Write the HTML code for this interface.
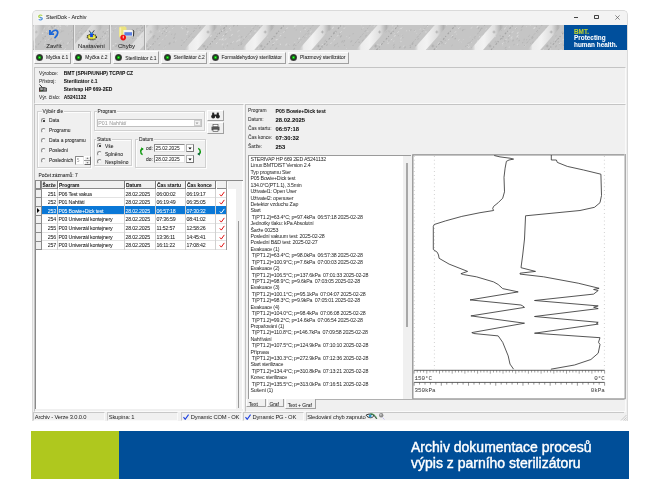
<!DOCTYPE html><html><head><meta charset="utf-8"><style>
*{margin:0;padding:0;box-sizing:border-box}
html,body{width:660px;height:495px;background:#fff;overflow:hidden;font-family:"Liberation Sans",sans-serif;color:#000}
.a{position:absolute}
.t{position:absolute;white-space:nowrap;line-height:1;-webkit-text-stroke-width:0.04px}
.tab{position:absolute;background:#f0f0f0;border:1px solid #a0a0a0;border-top-color:#fdfdfd;border-left-color:#fdfdfd}
.led{position:absolute;width:7px;height:7px;border-radius:50%;background:radial-gradient(circle at 50% 50%,#40ff40 0,#10b010 20%,#1d3a1d 42%,#3a3a3a 58%,#6a6a6a 82%,#a8a8a8 100%)}
.gb{position:absolute;border:1px solid #d0d0d0;box-shadow:inset 1px 1px 0 #fdfdfd,1px 1px 0 #fdfdfd}
.gl{-webkit-text-stroke-width:0.04px;position:absolute;background:#f0f0f0;padding:0 1px;font-size:4.9px;line-height:1;color:#222;white-space:nowrap}
.rd{position:absolute;width:5px;height:5px;border-radius:50%;border:0.7px solid;border-color:#8a8a8a #ececec #ececec #8a8a8a;background:#f8f8f8}
.rd.on::after{content:"";position:absolute;left:1.1px;top:1.1px;width:1.8px;height:1.8px;border-radius:50%;background:#111}
.f5{font-size:4.9px;color:#1a1a1a}
.cell{position:absolute;font-size:4.85px;line-height:1;white-space:nowrap;color:#1a1a1a}
.tl{position:absolute;left:250.5px;font-size:5.3px;letter-spacing:-0.21px;line-height:1;white-space:nowrap;color:#262626}
.sb{-webkit-text-stroke-width:0px;position:absolute;top:412.3px;height:8.4px;border:0.8px solid;border-color:#c8c8c8 #fafafa #fafafa #c8c8c8;font-size:5.8px;letter-spacing:-0.17px;line-height:8.6px;padding-left:0.3px;white-space:nowrap;color:#222}
</style></head><body><div style="position:absolute;left:0;top:0;width:660px;height:495px;will-change:transform">
<div class="a" style="left:32px;top:10px;width:596px;height:411px;background:#f0f0f0;border:1px solid #dadada;border-bottom:none;border-radius:5px 5px 0 0"></div>
<div class="a" style="left:33px;top:11px;width:594px;height:14px;background:#f3f3f3;border-radius:4px 4px 0 0"></div>
<svg class="a" style="left:36.5px;top:14px" width="7" height="7" viewBox="0 0 7 7"><circle cx="3.5" cy="3.5" r="3.4" fill="#fafafa"/><path d="M5.3 1.6 C4.2 0.6 1.6 0.9 1.7 2.6 C1.8 3.6 3.4 3.3 4 3.6" fill="none" stroke="#a8d04a" stroke-width="1.2"/><path d="M1.7 5.4 C2.8 6.4 5.4 6.1 5.3 4.4 C5.2 3.4 3.6 3.7 3 3.4" fill="none" stroke="#4a8fd8" stroke-width="1.2"/></svg>
<div class="t" style="left:46px;top:15.2px;font-size:5.45px;color:#222">SteriDok - Archiv</div>
<div class="a" style="left:573.5px;top:17px;width:4.5px;height:0.6px;background:#444"></div>
<div class="a" style="left:594.2px;top:14.6px;width:4.6px;height:4.6px;border:0.6px solid #444;border-radius:0.8px"></div>
<svg class="a" style="left:615px;top:14.6px" width="5" height="5" viewBox="0 0 5 5"><path d="M0.4 0.4L4.6 4.6M4.6 0.4L0.4 4.6" stroke="#444" stroke-width="0.6"/></svg>
<svg class="a" style="left:33px;top:25px" width="531" height="25" viewBox="33 25 531 25"><defs><linearGradient id="st" x1="0" y1="0" x2="1" y2="0"><stop offset="0" stop-color="#c6c6c6" stop-opacity="0"/><stop offset="0.15" stop-color="#ececec"/><stop offset="0.4" stop-color="#f2f2f2"/><stop offset="0.7" stop-color="#dedede"/><stop offset="0.88" stop-color="#b0b0b0"/><stop offset="1" stop-color="#c6c6c6" stop-opacity="0"/></linearGradient></defs><rect x="33" y="25" width="531" height="25" fill="#c5c5c5"/><ellipse cx="205.0" cy="28.8" rx="0.5" ry="0.6" fill="#d4d4d4" opacity="0.7" transform="rotate(-50 205.0 28.8)"/><ellipse cx="83.0" cy="39.6" rx="0.7" ry="0.3" fill="#e2e2e2" opacity="0.7" transform="rotate(-50 83.0 39.6)"/><ellipse cx="255.0" cy="31.0" rx="0.9" ry="0.6" fill="#e2e2e2" opacity="0.7" transform="rotate(-50 255.0 31.0)"/><ellipse cx="98.7" cy="30.6" rx="1.1" ry="0.3" fill="#d4d4d4" opacity="0.7" transform="rotate(-50 98.7 30.6)"/><ellipse cx="343.9" cy="26.2" rx="0.5" ry="0.6" fill="#aeaeae" opacity="0.7" transform="rotate(-50 343.9 26.2)"/><ellipse cx="186.8" cy="28.6" rx="1.1" ry="0.5" fill="#a6a6a6" opacity="0.7" transform="rotate(-50 186.8 28.6)"/><ellipse cx="395.1" cy="27.6" rx="1.2" ry="0.4" fill="#e2e2e2" opacity="0.7" transform="rotate(-50 395.1 27.6)"/><ellipse cx="323.9" cy="26.6" rx="1.1" ry="0.5" fill="#a6a6a6" opacity="0.7" transform="rotate(-50 323.9 26.6)"/><ellipse cx="315.3" cy="44.4" rx="1.1" ry="0.5" fill="#dcdcdc" opacity="0.7" transform="rotate(-50 315.3 44.4)"/><ellipse cx="192.2" cy="44.9" rx="1.3" ry="0.3" fill="#d4d4d4" opacity="0.7" transform="rotate(-50 192.2 44.9)"/><ellipse cx="192.4" cy="37.4" rx="1.3" ry="0.4" fill="#b6b6b6" opacity="0.7" transform="rotate(-50 192.4 37.4)"/><ellipse cx="553.5" cy="28.0" rx="0.6" ry="0.4" fill="#dcdcdc" opacity="0.7" transform="rotate(-50 553.5 28.0)"/><ellipse cx="528.6" cy="35.5" rx="0.5" ry="0.5" fill="#d4d4d4" opacity="0.7" transform="rotate(-50 528.6 35.5)"/><ellipse cx="452.0" cy="45.5" rx="1.2" ry="0.5" fill="#b6b6b6" opacity="0.7" transform="rotate(-50 452.0 45.5)"/><ellipse cx="340.9" cy="36.4" rx="1.5" ry="0.5" fill="#a6a6a6" opacity="0.7" transform="rotate(-50 340.9 36.4)"/><ellipse cx="385.7" cy="26.5" rx="0.8" ry="0.5" fill="#d4d4d4" opacity="0.7" transform="rotate(-50 385.7 26.5)"/><ellipse cx="394.7" cy="36.1" rx="0.9" ry="0.6" fill="#d4d4d4" opacity="0.7" transform="rotate(-50 394.7 36.1)"/><ellipse cx="45.0" cy="36.5" rx="1.1" ry="0.5" fill="#aeaeae" opacity="0.7" transform="rotate(-50 45.0 36.5)"/><ellipse cx="148.9" cy="32.2" rx="0.7" ry="0.5" fill="#d4d4d4" opacity="0.7" transform="rotate(-50 148.9 32.2)"/><ellipse cx="495.7" cy="27.0" rx="0.9" ry="0.4" fill="#dcdcdc" opacity="0.7" transform="rotate(-50 495.7 27.0)"/><ellipse cx="105.7" cy="35.8" rx="0.7" ry="0.5" fill="#e2e2e2" opacity="0.7" transform="rotate(-50 105.7 35.8)"/><ellipse cx="223.5" cy="47.1" rx="0.6" ry="0.4" fill="#aeaeae" opacity="0.7" transform="rotate(-50 223.5 47.1)"/><ellipse cx="156.2" cy="30.8" rx="1.4" ry="0.4" fill="#dcdcdc" opacity="0.7" transform="rotate(-50 156.2 30.8)"/><ellipse cx="182.7" cy="28.6" rx="0.8" ry="0.5" fill="#e2e2e2" opacity="0.7" transform="rotate(-50 182.7 28.6)"/><ellipse cx="539.1" cy="42.3" rx="1.5" ry="0.6" fill="#e2e2e2" opacity="0.7" transform="rotate(-50 539.1 42.3)"/><ellipse cx="425.8" cy="36.4" rx="1.4" ry="0.5" fill="#d4d4d4" opacity="0.7" transform="rotate(-50 425.8 36.4)"/><ellipse cx="244.9" cy="27.6" rx="0.9" ry="0.4" fill="#d4d4d4" opacity="0.7" transform="rotate(-50 244.9 27.6)"/><ellipse cx="555.9" cy="36.0" rx="0.8" ry="0.3" fill="#a6a6a6" opacity="0.7" transform="rotate(-50 555.9 36.0)"/><ellipse cx="33.1" cy="28.8" rx="1.5" ry="0.5" fill="#a6a6a6" opacity="0.7" transform="rotate(-50 33.1 28.8)"/><ellipse cx="70.3" cy="30.2" rx="0.6" ry="0.4" fill="#dcdcdc" opacity="0.7" transform="rotate(-50 70.3 30.2)"/><ellipse cx="217.5" cy="34.1" rx="0.5" ry="0.5" fill="#a6a6a6" opacity="0.7" transform="rotate(-50 217.5 34.1)"/><ellipse cx="552.2" cy="37.0" rx="0.5" ry="0.3" fill="#b6b6b6" opacity="0.7" transform="rotate(-50 552.2 37.0)"/><ellipse cx="214.9" cy="31.6" rx="0.6" ry="0.3" fill="#d4d4d4" opacity="0.7" transform="rotate(-50 214.9 31.6)"/><ellipse cx="538.0" cy="38.2" rx="1.2" ry="0.7" fill="#aeaeae" opacity="0.7" transform="rotate(-50 538.0 38.2)"/><ellipse cx="435.6" cy="32.5" rx="1.4" ry="0.6" fill="#d4d4d4" opacity="0.7" transform="rotate(-50 435.6 32.5)"/><ellipse cx="171.7" cy="34.2" rx="0.8" ry="0.4" fill="#aeaeae" opacity="0.7" transform="rotate(-50 171.7 34.2)"/><ellipse cx="320.6" cy="37.6" rx="0.7" ry="0.6" fill="#d4d4d4" opacity="0.7" transform="rotate(-50 320.6 37.6)"/><ellipse cx="556.0" cy="46.3" rx="1.4" ry="0.6" fill="#aeaeae" opacity="0.7" transform="rotate(-50 556.0 46.3)"/><ellipse cx="153.4" cy="37.9" rx="1.3" ry="0.7" fill="#b6b6b6" opacity="0.7" transform="rotate(-50 153.4 37.9)"/><ellipse cx="452.6" cy="36.8" rx="1.2" ry="0.7" fill="#aeaeae" opacity="0.7" transform="rotate(-50 452.6 36.8)"/><ellipse cx="270.5" cy="48.4" rx="1.5" ry="0.4" fill="#b6b6b6" opacity="0.7" transform="rotate(-50 270.5 48.4)"/><ellipse cx="150.1" cy="30.7" rx="0.8" ry="0.5" fill="#aeaeae" opacity="0.7" transform="rotate(-50 150.1 30.7)"/><ellipse cx="556.2" cy="40.3" rx="1.0" ry="0.6" fill="#a6a6a6" opacity="0.7" transform="rotate(-50 556.2 40.3)"/><ellipse cx="457.6" cy="27.1" rx="0.5" ry="0.5" fill="#d4d4d4" opacity="0.7" transform="rotate(-50 457.6 27.1)"/><ellipse cx="410.8" cy="30.0" rx="0.9" ry="0.6" fill="#aeaeae" opacity="0.7" transform="rotate(-50 410.8 30.0)"/><ellipse cx="79.1" cy="48.7" rx="0.9" ry="0.5" fill="#d4d4d4" opacity="0.7" transform="rotate(-50 79.1 48.7)"/><ellipse cx="535.7" cy="43.1" rx="1.6" ry="0.3" fill="#aeaeae" opacity="0.7" transform="rotate(-50 535.7 43.1)"/><ellipse cx="346.7" cy="36.6" rx="0.6" ry="0.6" fill="#d4d4d4" opacity="0.7" transform="rotate(-50 346.7 36.6)"/><ellipse cx="553.5" cy="41.4" rx="0.6" ry="0.5" fill="#b6b6b6" opacity="0.7" transform="rotate(-50 553.5 41.4)"/><ellipse cx="44.4" cy="45.0" rx="1.2" ry="0.5" fill="#d4d4d4" opacity="0.7" transform="rotate(-50 44.4 45.0)"/><ellipse cx="528.8" cy="35.8" rx="1.4" ry="0.4" fill="#aeaeae" opacity="0.7" transform="rotate(-50 528.8 35.8)"/><ellipse cx="166.7" cy="32.3" rx="1.3" ry="0.4" fill="#aeaeae" opacity="0.7" transform="rotate(-50 166.7 32.3)"/><ellipse cx="322.1" cy="45.9" rx="1.5" ry="0.4" fill="#a6a6a6" opacity="0.7" transform="rotate(-50 322.1 45.9)"/><ellipse cx="276.3" cy="39.6" rx="0.9" ry="0.7" fill="#e2e2e2" opacity="0.7" transform="rotate(-50 276.3 39.6)"/><ellipse cx="299.4" cy="38.3" rx="1.0" ry="0.6" fill="#e2e2e2" opacity="0.7" transform="rotate(-50 299.4 38.3)"/><ellipse cx="445.3" cy="40.2" rx="0.6" ry="0.5" fill="#aeaeae" opacity="0.7" transform="rotate(-50 445.3 40.2)"/><ellipse cx="418.1" cy="38.9" rx="1.2" ry="0.5" fill="#b6b6b6" opacity="0.7" transform="rotate(-50 418.1 38.9)"/><ellipse cx="289.2" cy="44.4" rx="0.5" ry="0.4" fill="#e2e2e2" opacity="0.7" transform="rotate(-50 289.2 44.4)"/><ellipse cx="55.4" cy="27.4" rx="1.1" ry="0.6" fill="#dcdcdc" opacity="0.7" transform="rotate(-50 55.4 27.4)"/><ellipse cx="517.5" cy="36.1" rx="1.6" ry="0.5" fill="#e2e2e2" opacity="0.7" transform="rotate(-50 517.5 36.1)"/><ellipse cx="138.9" cy="31.9" rx="1.0" ry="0.5" fill="#e2e2e2" opacity="0.7" transform="rotate(-50 138.9 31.9)"/><ellipse cx="532.9" cy="42.5" rx="1.5" ry="0.7" fill="#b6b6b6" opacity="0.7" transform="rotate(-50 532.9 42.5)"/><ellipse cx="140.6" cy="36.2" rx="0.5" ry="0.5" fill="#dcdcdc" opacity="0.7" transform="rotate(-50 140.6 36.2)"/><ellipse cx="71.5" cy="31.0" rx="0.7" ry="0.4" fill="#a6a6a6" opacity="0.7" transform="rotate(-50 71.5 31.0)"/><ellipse cx="98.0" cy="44.4" rx="1.2" ry="0.4" fill="#d4d4d4" opacity="0.7" transform="rotate(-50 98.0 44.4)"/><ellipse cx="167.4" cy="28.4" rx="0.7" ry="0.7" fill="#dcdcdc" opacity="0.7" transform="rotate(-50 167.4 28.4)"/><ellipse cx="244.5" cy="37.2" rx="1.4" ry="0.4" fill="#d4d4d4" opacity="0.7" transform="rotate(-50 244.5 37.2)"/><ellipse cx="262.1" cy="37.9" rx="0.9" ry="0.4" fill="#b6b6b6" opacity="0.7" transform="rotate(-50 262.1 37.9)"/><ellipse cx="82.0" cy="34.1" rx="1.1" ry="0.5" fill="#b6b6b6" opacity="0.7" transform="rotate(-50 82.0 34.1)"/><ellipse cx="42.6" cy="33.3" rx="0.8" ry="0.7" fill="#e2e2e2" opacity="0.7" transform="rotate(-50 42.6 33.3)"/><ellipse cx="92.9" cy="48.0" rx="1.6" ry="0.3" fill="#aeaeae" opacity="0.7" transform="rotate(-50 92.9 48.0)"/><ellipse cx="174.0" cy="26.0" rx="0.7" ry="0.4" fill="#aeaeae" opacity="0.7" transform="rotate(-50 174.0 26.0)"/><ellipse cx="257.2" cy="47.8" rx="0.9" ry="0.5" fill="#b6b6b6" opacity="0.7" transform="rotate(-50 257.2 47.8)"/><ellipse cx="306.3" cy="37.4" rx="0.5" ry="0.3" fill="#b6b6b6" opacity="0.7" transform="rotate(-50 306.3 37.4)"/><ellipse cx="398.4" cy="35.6" rx="0.7" ry="0.3" fill="#a6a6a6" opacity="0.7" transform="rotate(-50 398.4 35.6)"/><ellipse cx="80.0" cy="31.5" rx="1.4" ry="0.3" fill="#e2e2e2" opacity="0.7" transform="rotate(-50 80.0 31.5)"/><ellipse cx="491.1" cy="36.3" rx="1.6" ry="0.5" fill="#b6b6b6" opacity="0.7" transform="rotate(-50 491.1 36.3)"/><ellipse cx="519.1" cy="40.5" rx="1.0" ry="0.4" fill="#a6a6a6" opacity="0.7" transform="rotate(-50 519.1 40.5)"/><ellipse cx="91.1" cy="29.0" rx="0.6" ry="0.7" fill="#a6a6a6" opacity="0.7" transform="rotate(-50 91.1 29.0)"/><ellipse cx="366.8" cy="38.3" rx="0.7" ry="0.5" fill="#aeaeae" opacity="0.7" transform="rotate(-50 366.8 38.3)"/><ellipse cx="127.5" cy="33.7" rx="1.6" ry="0.3" fill="#a6a6a6" opacity="0.7" transform="rotate(-50 127.5 33.7)"/><ellipse cx="42.8" cy="37.6" rx="1.0" ry="0.4" fill="#aeaeae" opacity="0.7" transform="rotate(-50 42.8 37.6)"/><ellipse cx="270.4" cy="41.5" rx="0.9" ry="0.5" fill="#d4d4d4" opacity="0.7" transform="rotate(-50 270.4 41.5)"/><ellipse cx="476.2" cy="34.8" rx="0.8" ry="0.4" fill="#e2e2e2" opacity="0.7" transform="rotate(-50 476.2 34.8)"/><ellipse cx="154.9" cy="30.0" rx="1.3" ry="0.4" fill="#d4d4d4" opacity="0.7" transform="rotate(-50 154.9 30.0)"/><ellipse cx="558.4" cy="49.5" rx="0.4" ry="0.6" fill="#aeaeae" opacity="0.7" transform="rotate(-50 558.4 49.5)"/><ellipse cx="500.2" cy="35.8" rx="0.5" ry="0.6" fill="#a6a6a6" opacity="0.7" transform="rotate(-50 500.2 35.8)"/><ellipse cx="495.3" cy="41.8" rx="1.1" ry="0.6" fill="#b6b6b6" opacity="0.7" transform="rotate(-50 495.3 41.8)"/><ellipse cx="57.0" cy="29.6" rx="0.9" ry="0.4" fill="#b6b6b6" opacity="0.7" transform="rotate(-50 57.0 29.6)"/><ellipse cx="543.7" cy="49.3" rx="0.8" ry="0.3" fill="#e2e2e2" opacity="0.7" transform="rotate(-50 543.7 49.3)"/><ellipse cx="501.5" cy="30.4" rx="0.4" ry="0.5" fill="#aeaeae" opacity="0.7" transform="rotate(-50 501.5 30.4)"/><ellipse cx="285.0" cy="37.6" rx="0.7" ry="0.6" fill="#aeaeae" opacity="0.7" transform="rotate(-50 285.0 37.6)"/><ellipse cx="81.2" cy="45.4" rx="0.9" ry="0.3" fill="#aeaeae" opacity="0.7" transform="rotate(-50 81.2 45.4)"/><ellipse cx="44.9" cy="32.6" rx="0.5" ry="0.7" fill="#aeaeae" opacity="0.7" transform="rotate(-50 44.9 32.6)"/><ellipse cx="486.1" cy="28.9" rx="1.3" ry="0.5" fill="#d4d4d4" opacity="0.7" transform="rotate(-50 486.1 28.9)"/><ellipse cx="438.8" cy="43.0" rx="0.6" ry="0.6" fill="#dcdcdc" opacity="0.7" transform="rotate(-50 438.8 43.0)"/><ellipse cx="374.5" cy="26.1" rx="1.5" ry="0.6" fill="#d4d4d4" opacity="0.7" transform="rotate(-50 374.5 26.1)"/><ellipse cx="422.7" cy="45.3" rx="1.5" ry="0.6" fill="#aeaeae" opacity="0.7" transform="rotate(-50 422.7 45.3)"/><ellipse cx="334.9" cy="45.3" rx="1.4" ry="0.5" fill="#a6a6a6" opacity="0.7" transform="rotate(-50 334.9 45.3)"/><ellipse cx="507.1" cy="42.1" rx="1.2" ry="0.3" fill="#d4d4d4" opacity="0.7" transform="rotate(-50 507.1 42.1)"/><ellipse cx="55.2" cy="40.9" rx="0.9" ry="0.5" fill="#a6a6a6" opacity="0.7" transform="rotate(-50 55.2 40.9)"/><ellipse cx="60.0" cy="25.5" rx="1.2" ry="0.5" fill="#e2e2e2" opacity="0.7" transform="rotate(-50 60.0 25.5)"/><ellipse cx="34.8" cy="44.9" rx="1.5" ry="0.7" fill="#d4d4d4" opacity="0.7" transform="rotate(-50 34.8 44.9)"/><ellipse cx="81.8" cy="38.1" rx="1.3" ry="0.4" fill="#d4d4d4" opacity="0.7" transform="rotate(-50 81.8 38.1)"/><ellipse cx="72.5" cy="31.6" rx="1.3" ry="0.4" fill="#d4d4d4" opacity="0.7" transform="rotate(-50 72.5 31.6)"/><ellipse cx="378.1" cy="36.5" rx="0.5" ry="0.7" fill="#dcdcdc" opacity="0.7" transform="rotate(-50 378.1 36.5)"/><ellipse cx="185.6" cy="26.2" rx="1.2" ry="0.3" fill="#d4d4d4" opacity="0.7" transform="rotate(-50 185.6 26.2)"/><ellipse cx="111.3" cy="31.3" rx="1.2" ry="0.5" fill="#d4d4d4" opacity="0.7" transform="rotate(-50 111.3 31.3)"/><ellipse cx="103.9" cy="37.1" rx="0.7" ry="0.6" fill="#dcdcdc" opacity="0.7" transform="rotate(-50 103.9 37.1)"/><ellipse cx="400.6" cy="41.9" rx="1.3" ry="0.4" fill="#b6b6b6" opacity="0.7" transform="rotate(-50 400.6 41.9)"/><ellipse cx="280.4" cy="44.2" rx="0.6" ry="0.7" fill="#e2e2e2" opacity="0.7" transform="rotate(-50 280.4 44.2)"/><ellipse cx="530.2" cy="25.4" rx="0.5" ry="0.5" fill="#dcdcdc" opacity="0.7" transform="rotate(-50 530.2 25.4)"/><ellipse cx="561.1" cy="49.8" rx="0.7" ry="0.7" fill="#dcdcdc" opacity="0.7" transform="rotate(-50 561.1 49.8)"/><ellipse cx="144.9" cy="39.5" rx="1.3" ry="0.4" fill="#aeaeae" opacity="0.7" transform="rotate(-50 144.9 39.5)"/><ellipse cx="223.9" cy="40.1" rx="1.0" ry="0.7" fill="#d4d4d4" opacity="0.7" transform="rotate(-50 223.9 40.1)"/><ellipse cx="406.5" cy="30.8" rx="0.9" ry="0.4" fill="#dcdcdc" opacity="0.7" transform="rotate(-50 406.5 30.8)"/><ellipse cx="537.4" cy="42.0" rx="0.8" ry="0.4" fill="#dcdcdc" opacity="0.7" transform="rotate(-50 537.4 42.0)"/><ellipse cx="215.6" cy="32.9" rx="0.4" ry="0.6" fill="#b6b6b6" opacity="0.7" transform="rotate(-50 215.6 32.9)"/><ellipse cx="478.6" cy="28.0" rx="1.3" ry="0.7" fill="#aeaeae" opacity="0.7" transform="rotate(-50 478.6 28.0)"/><ellipse cx="186.9" cy="34.3" rx="0.9" ry="0.6" fill="#dcdcdc" opacity="0.7" transform="rotate(-50 186.9 34.3)"/><ellipse cx="73.6" cy="48.1" rx="1.4" ry="0.4" fill="#b6b6b6" opacity="0.7" transform="rotate(-50 73.6 48.1)"/><ellipse cx="60.4" cy="41.5" rx="1.5" ry="0.4" fill="#d4d4d4" opacity="0.7" transform="rotate(-50 60.4 41.5)"/><ellipse cx="174.1" cy="37.8" rx="1.3" ry="0.6" fill="#aeaeae" opacity="0.7" transform="rotate(-50 174.1 37.8)"/><ellipse cx="260.1" cy="25.7" rx="0.9" ry="0.7" fill="#d4d4d4" opacity="0.7" transform="rotate(-50 260.1 25.7)"/><ellipse cx="327.3" cy="30.1" rx="0.5" ry="0.6" fill="#a6a6a6" opacity="0.7" transform="rotate(-50 327.3 30.1)"/><ellipse cx="272.4" cy="43.8" rx="1.4" ry="0.5" fill="#d4d4d4" opacity="0.7" transform="rotate(-50 272.4 43.8)"/><ellipse cx="517.2" cy="38.8" rx="1.0" ry="0.4" fill="#aeaeae" opacity="0.7" transform="rotate(-50 517.2 38.8)"/><ellipse cx="191.1" cy="43.5" rx="0.7" ry="0.6" fill="#d4d4d4" opacity="0.7" transform="rotate(-50 191.1 43.5)"/><ellipse cx="192.7" cy="38.9" rx="0.5" ry="0.6" fill="#dcdcdc" opacity="0.7" transform="rotate(-50 192.7 38.9)"/><ellipse cx="72.9" cy="37.5" rx="1.1" ry="0.5" fill="#dcdcdc" opacity="0.7" transform="rotate(-50 72.9 37.5)"/><ellipse cx="209.7" cy="44.0" rx="0.6" ry="0.4" fill="#dcdcdc" opacity="0.7" transform="rotate(-50 209.7 44.0)"/><ellipse cx="81.2" cy="33.5" rx="0.8" ry="0.4" fill="#a6a6a6" opacity="0.7" transform="rotate(-50 81.2 33.5)"/><ellipse cx="462.8" cy="30.1" rx="1.3" ry="0.5" fill="#a6a6a6" opacity="0.7" transform="rotate(-50 462.8 30.1)"/><ellipse cx="252.8" cy="38.1" rx="0.7" ry="0.6" fill="#dcdcdc" opacity="0.7" transform="rotate(-50 252.8 38.1)"/><ellipse cx="297.5" cy="39.4" rx="0.6" ry="0.5" fill="#b6b6b6" opacity="0.7" transform="rotate(-50 297.5 39.4)"/><ellipse cx="367.3" cy="46.6" rx="0.5" ry="0.7" fill="#aeaeae" opacity="0.7" transform="rotate(-50 367.3 46.6)"/><ellipse cx="237.2" cy="41.1" rx="1.5" ry="0.6" fill="#dcdcdc" opacity="0.7" transform="rotate(-50 237.2 41.1)"/><ellipse cx="496.5" cy="25.5" rx="0.9" ry="0.6" fill="#a6a6a6" opacity="0.7" transform="rotate(-50 496.5 25.5)"/><ellipse cx="460.1" cy="49.2" rx="0.4" ry="0.5" fill="#dcdcdc" opacity="0.7" transform="rotate(-50 460.1 49.2)"/><ellipse cx="525.1" cy="45.6" rx="1.6" ry="0.4" fill="#dcdcdc" opacity="0.7" transform="rotate(-50 525.1 45.6)"/><ellipse cx="90.9" cy="28.9" rx="1.6" ry="0.3" fill="#e2e2e2" opacity="0.7" transform="rotate(-50 90.9 28.9)"/><ellipse cx="471.3" cy="42.5" rx="0.5" ry="0.6" fill="#dcdcdc" opacity="0.7" transform="rotate(-50 471.3 42.5)"/><ellipse cx="33.7" cy="28.1" rx="1.5" ry="0.6" fill="#e2e2e2" opacity="0.7" transform="rotate(-50 33.7 28.1)"/><ellipse cx="194.3" cy="28.2" rx="1.0" ry="0.5" fill="#b6b6b6" opacity="0.7" transform="rotate(-50 194.3 28.2)"/><ellipse cx="438.6" cy="27.5" rx="1.0" ry="0.5" fill="#b6b6b6" opacity="0.7" transform="rotate(-50 438.6 27.5)"/><ellipse cx="239.1" cy="30.6" rx="0.4" ry="0.5" fill="#e2e2e2" opacity="0.7" transform="rotate(-50 239.1 30.6)"/><ellipse cx="562.1" cy="32.0" rx="1.2" ry="0.7" fill="#b6b6b6" opacity="0.7" transform="rotate(-50 562.1 32.0)"/><ellipse cx="285.4" cy="30.9" rx="0.4" ry="0.5" fill="#aeaeae" opacity="0.7" transform="rotate(-50 285.4 30.9)"/><ellipse cx="378.0" cy="26.4" rx="1.0" ry="0.6" fill="#aeaeae" opacity="0.7" transform="rotate(-50 378.0 26.4)"/><ellipse cx="256.0" cy="31.4" rx="0.9" ry="0.4" fill="#d4d4d4" opacity="0.7" transform="rotate(-50 256.0 31.4)"/><ellipse cx="294.8" cy="42.4" rx="0.9" ry="0.6" fill="#d4d4d4" opacity="0.7" transform="rotate(-50 294.8 42.4)"/><ellipse cx="138.2" cy="44.9" rx="1.4" ry="0.3" fill="#d4d4d4" opacity="0.7" transform="rotate(-50 138.2 44.9)"/><ellipse cx="296.2" cy="30.0" rx="0.7" ry="0.4" fill="#aeaeae" opacity="0.7" transform="rotate(-50 296.2 30.0)"/><ellipse cx="436.8" cy="32.4" rx="1.0" ry="0.4" fill="#e2e2e2" opacity="0.7" transform="rotate(-50 436.8 32.4)"/><ellipse cx="151.6" cy="35.4" rx="0.5" ry="0.5" fill="#d4d4d4" opacity="0.7" transform="rotate(-50 151.6 35.4)"/><ellipse cx="522.5" cy="26.4" rx="1.6" ry="0.4" fill="#a6a6a6" opacity="0.7" transform="rotate(-50 522.5 26.4)"/><ellipse cx="60.5" cy="26.5" rx="0.9" ry="0.6" fill="#dcdcdc" opacity="0.7" transform="rotate(-50 60.5 26.5)"/><ellipse cx="199.8" cy="27.8" rx="1.5" ry="0.4" fill="#a6a6a6" opacity="0.7" transform="rotate(-50 199.8 27.8)"/><ellipse cx="131.5" cy="48.4" rx="1.0" ry="0.4" fill="#d4d4d4" opacity="0.7" transform="rotate(-50 131.5 48.4)"/><ellipse cx="418.2" cy="46.0" rx="0.9" ry="0.3" fill="#b6b6b6" opacity="0.7" transform="rotate(-50 418.2 46.0)"/><ellipse cx="74.5" cy="27.0" rx="1.5" ry="0.3" fill="#dcdcdc" opacity="0.7" transform="rotate(-50 74.5 27.0)"/><ellipse cx="545.0" cy="30.2" rx="1.3" ry="0.4" fill="#b6b6b6" opacity="0.7" transform="rotate(-50 545.0 30.2)"/><ellipse cx="459.9" cy="27.2" rx="1.0" ry="0.4" fill="#d4d4d4" opacity="0.7" transform="rotate(-50 459.9 27.2)"/><ellipse cx="521.3" cy="29.8" rx="1.3" ry="0.5" fill="#b6b6b6" opacity="0.7" transform="rotate(-50 521.3 29.8)"/><ellipse cx="368.4" cy="31.2" rx="1.3" ry="0.3" fill="#d4d4d4" opacity="0.7" transform="rotate(-50 368.4 31.2)"/><ellipse cx="51.5" cy="26.6" rx="0.7" ry="0.6" fill="#a6a6a6" opacity="0.7" transform="rotate(-50 51.5 26.6)"/><ellipse cx="510.1" cy="33.5" rx="0.8" ry="0.7" fill="#b6b6b6" opacity="0.7" transform="rotate(-50 510.1 33.5)"/><ellipse cx="56.1" cy="43.7" rx="0.8" ry="0.4" fill="#d4d4d4" opacity="0.7" transform="rotate(-50 56.1 43.7)"/><ellipse cx="35.0" cy="43.9" rx="1.5" ry="0.3" fill="#d4d4d4" opacity="0.7" transform="rotate(-50 35.0 43.9)"/><ellipse cx="471.6" cy="27.7" rx="1.5" ry="0.7" fill="#d4d4d4" opacity="0.7" transform="rotate(-50 471.6 27.7)"/><ellipse cx="238.2" cy="31.3" rx="1.4" ry="0.4" fill="#dcdcdc" opacity="0.7" transform="rotate(-50 238.2 31.3)"/><ellipse cx="296.7" cy="25.2" rx="0.8" ry="0.6" fill="#d4d4d4" opacity="0.7" transform="rotate(-50 296.7 25.2)"/><ellipse cx="113.3" cy="30.9" rx="1.0" ry="0.6" fill="#b6b6b6" opacity="0.7" transform="rotate(-50 113.3 30.9)"/><ellipse cx="349.3" cy="37.8" rx="1.3" ry="0.4" fill="#dcdcdc" opacity="0.7" transform="rotate(-50 349.3 37.8)"/><ellipse cx="67.4" cy="25.8" rx="1.1" ry="0.4" fill="#e2e2e2" opacity="0.7" transform="rotate(-50 67.4 25.8)"/><ellipse cx="259.5" cy="27.6" rx="0.7" ry="0.3" fill="#a6a6a6" opacity="0.7" transform="rotate(-50 259.5 27.6)"/><ellipse cx="84.2" cy="37.5" rx="1.6" ry="0.4" fill="#d4d4d4" opacity="0.7" transform="rotate(-50 84.2 37.5)"/><ellipse cx="103.6" cy="36.5" rx="0.7" ry="0.5" fill="#d4d4d4" opacity="0.7" transform="rotate(-50 103.6 36.5)"/><ellipse cx="443.9" cy="44.0" rx="0.8" ry="0.5" fill="#b6b6b6" opacity="0.7" transform="rotate(-50 443.9 44.0)"/><ellipse cx="231.0" cy="43.5" rx="0.9" ry="0.4" fill="#aeaeae" opacity="0.7" transform="rotate(-50 231.0 43.5)"/><ellipse cx="158.1" cy="32.0" rx="0.6" ry="0.3" fill="#e2e2e2" opacity="0.7" transform="rotate(-50 158.1 32.0)"/><ellipse cx="166.6" cy="31.1" rx="0.7" ry="0.6" fill="#e2e2e2" opacity="0.7" transform="rotate(-50 166.6 31.1)"/><ellipse cx="379.9" cy="49.8" rx="0.4" ry="0.7" fill="#a6a6a6" opacity="0.7" transform="rotate(-50 379.9 49.8)"/><ellipse cx="155.7" cy="36.2" rx="0.4" ry="0.4" fill="#b6b6b6" opacity="0.7" transform="rotate(-50 155.7 36.2)"/><ellipse cx="96.3" cy="29.7" rx="0.6" ry="0.3" fill="#e2e2e2" opacity="0.7" transform="rotate(-50 96.3 29.7)"/><ellipse cx="305.2" cy="29.4" rx="0.7" ry="0.6" fill="#e2e2e2" opacity="0.7" transform="rotate(-50 305.2 29.4)"/><ellipse cx="535.2" cy="27.6" rx="1.3" ry="0.4" fill="#e2e2e2" opacity="0.7" transform="rotate(-50 535.2 27.6)"/><ellipse cx="52.9" cy="33.5" rx="0.6" ry="0.4" fill="#a6a6a6" opacity="0.7" transform="rotate(-50 52.9 33.5)"/><ellipse cx="351.3" cy="41.3" rx="1.4" ry="0.6" fill="#aeaeae" opacity="0.7" transform="rotate(-50 351.3 41.3)"/><ellipse cx="250.2" cy="34.3" rx="0.8" ry="0.4" fill="#e2e2e2" opacity="0.7" transform="rotate(-50 250.2 34.3)"/><ellipse cx="455.3" cy="38.7" rx="0.9" ry="0.6" fill="#a6a6a6" opacity="0.7" transform="rotate(-50 455.3 38.7)"/><ellipse cx="385.6" cy="28.9" rx="0.5" ry="0.4" fill="#e2e2e2" opacity="0.7" transform="rotate(-50 385.6 28.9)"/><ellipse cx="402.3" cy="35.2" rx="1.2" ry="0.5" fill="#b6b6b6" opacity="0.7" transform="rotate(-50 402.3 35.2)"/><ellipse cx="60.3" cy="43.6" rx="0.9" ry="0.3" fill="#b6b6b6" opacity="0.7" transform="rotate(-50 60.3 43.6)"/><ellipse cx="440.1" cy="45.1" rx="0.6" ry="0.6" fill="#d4d4d4" opacity="0.7" transform="rotate(-50 440.1 45.1)"/><ellipse cx="141.1" cy="25.1" rx="0.9" ry="0.6" fill="#aeaeae" opacity="0.7" transform="rotate(-50 141.1 25.1)"/><ellipse cx="248.7" cy="47.1" rx="1.3" ry="0.4" fill="#dcdcdc" opacity="0.7" transform="rotate(-50 248.7 47.1)"/><ellipse cx="60.5" cy="28.6" rx="0.5" ry="0.5" fill="#dcdcdc" opacity="0.7" transform="rotate(-50 60.5 28.6)"/><ellipse cx="229.9" cy="37.6" rx="0.8" ry="0.4" fill="#aeaeae" opacity="0.7" transform="rotate(-50 229.9 37.6)"/><ellipse cx="124.2" cy="26.7" rx="1.0" ry="0.6" fill="#dcdcdc" opacity="0.7" transform="rotate(-50 124.2 26.7)"/><ellipse cx="546.4" cy="29.9" rx="1.4" ry="0.3" fill="#aeaeae" opacity="0.7" transform="rotate(-50 546.4 29.9)"/><ellipse cx="517.7" cy="32.9" rx="1.5" ry="0.5" fill="#e2e2e2" opacity="0.7" transform="rotate(-50 517.7 32.9)"/><ellipse cx="513.1" cy="40.5" rx="1.2" ry="0.6" fill="#aeaeae" opacity="0.7" transform="rotate(-50 513.1 40.5)"/><ellipse cx="362.8" cy="40.4" rx="1.4" ry="0.4" fill="#aeaeae" opacity="0.7" transform="rotate(-50 362.8 40.4)"/><ellipse cx="148.8" cy="35.0" rx="0.6" ry="0.4" fill="#e2e2e2" opacity="0.7" transform="rotate(-50 148.8 35.0)"/><ellipse cx="112.4" cy="49.3" rx="0.4" ry="0.5" fill="#aeaeae" opacity="0.7" transform="rotate(-50 112.4 49.3)"/><ellipse cx="435.2" cy="26.0" rx="0.5" ry="0.5" fill="#b6b6b6" opacity="0.7" transform="rotate(-50 435.2 26.0)"/><ellipse cx="325.1" cy="40.7" rx="1.2" ry="0.4" fill="#b6b6b6" opacity="0.7" transform="rotate(-50 325.1 40.7)"/><ellipse cx="165.4" cy="34.7" rx="0.9" ry="0.5" fill="#b6b6b6" opacity="0.7" transform="rotate(-50 165.4 34.7)"/><ellipse cx="45.4" cy="40.5" rx="1.0" ry="0.5" fill="#dcdcdc" opacity="0.7" transform="rotate(-50 45.4 40.5)"/><ellipse cx="361.5" cy="45.5" rx="1.4" ry="0.5" fill="#aeaeae" opacity="0.7" transform="rotate(-50 361.5 45.5)"/><ellipse cx="68.6" cy="34.0" rx="0.5" ry="0.5" fill="#b6b6b6" opacity="0.7" transform="rotate(-50 68.6 34.0)"/><ellipse cx="303.9" cy="26.0" rx="0.6" ry="0.7" fill="#d4d4d4" opacity="0.7" transform="rotate(-50 303.9 26.0)"/><ellipse cx="199.6" cy="43.0" rx="0.5" ry="0.5" fill="#a6a6a6" opacity="0.7" transform="rotate(-50 199.6 43.0)"/><ellipse cx="233.6" cy="48.8" rx="0.4" ry="0.3" fill="#aeaeae" opacity="0.7" transform="rotate(-50 233.6 48.8)"/><ellipse cx="359.1" cy="42.3" rx="0.6" ry="0.7" fill="#a6a6a6" opacity="0.7" transform="rotate(-50 359.1 42.3)"/><ellipse cx="294.2" cy="48.9" rx="1.2" ry="0.6" fill="#aeaeae" opacity="0.7" transform="rotate(-50 294.2 48.9)"/><ellipse cx="150.4" cy="45.8" rx="1.3" ry="0.4" fill="#e2e2e2" opacity="0.7" transform="rotate(-50 150.4 45.8)"/><ellipse cx="509.1" cy="31.9" rx="0.6" ry="0.5" fill="#dcdcdc" opacity="0.7" transform="rotate(-50 509.1 31.9)"/><ellipse cx="521.5" cy="30.2" rx="1.1" ry="0.4" fill="#b6b6b6" opacity="0.7" transform="rotate(-50 521.5 30.2)"/><ellipse cx="230.7" cy="30.0" rx="0.6" ry="0.7" fill="#dcdcdc" opacity="0.7" transform="rotate(-50 230.7 30.0)"/><ellipse cx="393.9" cy="47.4" rx="1.4" ry="0.4" fill="#aeaeae" opacity="0.7" transform="rotate(-50 393.9 47.4)"/><ellipse cx="440.9" cy="26.2" rx="1.6" ry="0.5" fill="#b6b6b6" opacity="0.7" transform="rotate(-50 440.9 26.2)"/><ellipse cx="309.9" cy="42.2" rx="0.7" ry="0.5" fill="#a6a6a6" opacity="0.7" transform="rotate(-50 309.9 42.2)"/><ellipse cx="487.9" cy="43.4" rx="0.7" ry="0.7" fill="#b6b6b6" opacity="0.7" transform="rotate(-50 487.9 43.4)"/><ellipse cx="339.6" cy="34.0" rx="0.9" ry="0.4" fill="#a6a6a6" opacity="0.7" transform="rotate(-50 339.6 34.0)"/><ellipse cx="427.8" cy="26.2" rx="0.7" ry="0.6" fill="#e2e2e2" opacity="0.7" transform="rotate(-50 427.8 26.2)"/><ellipse cx="555.5" cy="39.6" rx="1.5" ry="0.6" fill="#d4d4d4" opacity="0.7" transform="rotate(-50 555.5 39.6)"/><ellipse cx="429.7" cy="30.5" rx="1.1" ry="0.5" fill="#b6b6b6" opacity="0.7" transform="rotate(-50 429.7 30.5)"/><ellipse cx="305.2" cy="47.4" rx="1.0" ry="0.5" fill="#aeaeae" opacity="0.7" transform="rotate(-50 305.2 47.4)"/><ellipse cx="57.2" cy="26.4" rx="0.8" ry="0.3" fill="#e2e2e2" opacity="0.7" transform="rotate(-50 57.2 26.4)"/><ellipse cx="222.6" cy="30.6" rx="0.8" ry="0.4" fill="#e2e2e2" opacity="0.7" transform="rotate(-50 222.6 30.6)"/><ellipse cx="227.5" cy="45.7" rx="0.6" ry="0.7" fill="#aeaeae" opacity="0.7" transform="rotate(-50 227.5 45.7)"/><ellipse cx="162.3" cy="28.7" rx="0.5" ry="0.4" fill="#a6a6a6" opacity="0.7" transform="rotate(-50 162.3 28.7)"/><ellipse cx="386.4" cy="31.7" rx="1.6" ry="0.3" fill="#b6b6b6" opacity="0.7" transform="rotate(-50 386.4 31.7)"/><ellipse cx="468.9" cy="47.3" rx="1.2" ry="0.5" fill="#e2e2e2" opacity="0.7" transform="rotate(-50 468.9 47.3)"/><ellipse cx="530.6" cy="43.3" rx="0.6" ry="0.3" fill="#aeaeae" opacity="0.7" transform="rotate(-50 530.6 43.3)"/><ellipse cx="65.7" cy="25.6" rx="0.7" ry="0.3" fill="#aeaeae" opacity="0.7" transform="rotate(-50 65.7 25.6)"/><ellipse cx="446.6" cy="25.3" rx="1.2" ry="0.4" fill="#e2e2e2" opacity="0.7" transform="rotate(-50 446.6 25.3)"/><ellipse cx="252.4" cy="38.0" rx="1.0" ry="0.6" fill="#d4d4d4" opacity="0.7" transform="rotate(-50 252.4 38.0)"/><ellipse cx="464.9" cy="29.4" rx="0.5" ry="0.6" fill="#b6b6b6" opacity="0.7" transform="rotate(-50 464.9 29.4)"/><ellipse cx="560.8" cy="43.1" rx="1.3" ry="0.3" fill="#dcdcdc" opacity="0.7" transform="rotate(-50 560.8 43.1)"/><ellipse cx="481.4" cy="43.6" rx="0.5" ry="0.6" fill="#dcdcdc" opacity="0.7" transform="rotate(-50 481.4 43.6)"/><ellipse cx="126.1" cy="49.9" rx="0.7" ry="0.3" fill="#b6b6b6" opacity="0.7" transform="rotate(-50 126.1 49.9)"/><ellipse cx="211.2" cy="43.7" rx="1.5" ry="0.4" fill="#d4d4d4" opacity="0.7" transform="rotate(-50 211.2 43.7)"/><ellipse cx="60.9" cy="40.9" rx="0.9" ry="0.6" fill="#d4d4d4" opacity="0.7" transform="rotate(-50 60.9 40.9)"/><ellipse cx="310.8" cy="31.6" rx="1.5" ry="0.7" fill="#d4d4d4" opacity="0.7" transform="rotate(-50 310.8 31.6)"/><ellipse cx="78.4" cy="37.7" rx="0.7" ry="0.4" fill="#aeaeae" opacity="0.7" transform="rotate(-50 78.4 37.7)"/><ellipse cx="428.0" cy="48.6" rx="1.5" ry="0.4" fill="#d4d4d4" opacity="0.7" transform="rotate(-50 428.0 48.6)"/><ellipse cx="239.4" cy="40.0" rx="1.5" ry="0.6" fill="#dcdcdc" opacity="0.7" transform="rotate(-50 239.4 40.0)"/><ellipse cx="400.9" cy="41.6" rx="1.0" ry="0.6" fill="#e2e2e2" opacity="0.7" transform="rotate(-50 400.9 41.6)"/><ellipse cx="403.4" cy="46.4" rx="1.5" ry="0.4" fill="#dcdcdc" opacity="0.7" transform="rotate(-50 403.4 46.4)"/><ellipse cx="502.8" cy="44.7" rx="1.1" ry="0.3" fill="#dcdcdc" opacity="0.7" transform="rotate(-50 502.8 44.7)"/><ellipse cx="516.6" cy="28.6" rx="0.5" ry="0.5" fill="#a6a6a6" opacity="0.7" transform="rotate(-50 516.6 28.6)"/><ellipse cx="118.9" cy="49.4" rx="0.4" ry="0.3" fill="#d4d4d4" opacity="0.7" transform="rotate(-50 118.9 49.4)"/><ellipse cx="400.8" cy="40.8" rx="0.5" ry="0.3" fill="#d4d4d4" opacity="0.7" transform="rotate(-50 400.8 40.8)"/><ellipse cx="487.8" cy="44.0" rx="1.4" ry="0.6" fill="#aeaeae" opacity="0.7" transform="rotate(-50 487.8 44.0)"/><ellipse cx="506.3" cy="26.6" rx="1.5" ry="0.3" fill="#d4d4d4" opacity="0.7" transform="rotate(-50 506.3 26.6)"/><ellipse cx="142.2" cy="27.8" rx="1.5" ry="0.7" fill="#a6a6a6" opacity="0.7" transform="rotate(-50 142.2 27.8)"/><ellipse cx="433.2" cy="27.2" rx="1.2" ry="0.5" fill="#d4d4d4" opacity="0.7" transform="rotate(-50 433.2 27.2)"/><ellipse cx="103.4" cy="44.8" rx="0.6" ry="0.4" fill="#d4d4d4" opacity="0.7" transform="rotate(-50 103.4 44.8)"/><ellipse cx="258.0" cy="25.5" rx="1.5" ry="0.3" fill="#b6b6b6" opacity="0.7" transform="rotate(-50 258.0 25.5)"/><ellipse cx="436.5" cy="47.8" rx="1.0" ry="0.6" fill="#e2e2e2" opacity="0.7" transform="rotate(-50 436.5 47.8)"/><ellipse cx="361.3" cy="25.8" rx="0.4" ry="0.5" fill="#dcdcdc" opacity="0.7" transform="rotate(-50 361.3 25.8)"/><ellipse cx="85.2" cy="36.7" rx="1.0" ry="0.4" fill="#a6a6a6" opacity="0.7" transform="rotate(-50 85.2 36.7)"/><ellipse cx="490.8" cy="27.3" rx="0.6" ry="0.3" fill="#b6b6b6" opacity="0.7" transform="rotate(-50 490.8 27.3)"/><ellipse cx="140.3" cy="44.1" rx="0.4" ry="0.5" fill="#a6a6a6" opacity="0.7" transform="rotate(-50 140.3 44.1)"/><ellipse cx="294.0" cy="44.9" rx="1.6" ry="0.5" fill="#aeaeae" opacity="0.7" transform="rotate(-50 294.0 44.9)"/><ellipse cx="541.3" cy="37.9" rx="1.5" ry="0.4" fill="#e2e2e2" opacity="0.7" transform="rotate(-50 541.3 37.9)"/><ellipse cx="147.0" cy="42.5" rx="0.6" ry="0.7" fill="#dcdcdc" opacity="0.7" transform="rotate(-50 147.0 42.5)"/><ellipse cx="440.2" cy="37.3" rx="1.1" ry="0.3" fill="#d4d4d4" opacity="0.7" transform="rotate(-50 440.2 37.3)"/><ellipse cx="206.4" cy="27.4" rx="1.5" ry="0.6" fill="#dcdcdc" opacity="0.7" transform="rotate(-50 206.4 27.4)"/><ellipse cx="257.2" cy="41.1" rx="0.6" ry="0.4" fill="#b6b6b6" opacity="0.7" transform="rotate(-50 257.2 41.1)"/><ellipse cx="511.5" cy="37.5" rx="1.6" ry="0.6" fill="#dcdcdc" opacity="0.7" transform="rotate(-50 511.5 37.5)"/><ellipse cx="534.2" cy="28.2" rx="1.3" ry="0.6" fill="#e2e2e2" opacity="0.7" transform="rotate(-50 534.2 28.2)"/><ellipse cx="376.2" cy="33.7" rx="1.0" ry="0.6" fill="#b6b6b6" opacity="0.7" transform="rotate(-50 376.2 33.7)"/><ellipse cx="272.1" cy="38.8" rx="0.6" ry="0.5" fill="#b6b6b6" opacity="0.7" transform="rotate(-50 272.1 38.8)"/><ellipse cx="443.7" cy="39.5" rx="0.8" ry="0.6" fill="#aeaeae" opacity="0.7" transform="rotate(-50 443.7 39.5)"/><ellipse cx="402.9" cy="37.7" rx="0.8" ry="0.6" fill="#b6b6b6" opacity="0.7" transform="rotate(-50 402.9 37.7)"/><ellipse cx="481.0" cy="28.9" rx="1.6" ry="0.6" fill="#aeaeae" opacity="0.7" transform="rotate(-50 481.0 28.9)"/><ellipse cx="353.1" cy="33.7" rx="0.8" ry="0.4" fill="#aeaeae" opacity="0.7" transform="rotate(-50 353.1 33.7)"/><ellipse cx="550.8" cy="43.2" rx="0.6" ry="0.6" fill="#a6a6a6" opacity="0.7" transform="rotate(-50 550.8 43.2)"/><ellipse cx="136.8" cy="28.8" rx="1.4" ry="0.6" fill="#aeaeae" opacity="0.7" transform="rotate(-50 136.8 28.8)"/><ellipse cx="263.9" cy="29.9" rx="1.5" ry="0.4" fill="#d4d4d4" opacity="0.7" transform="rotate(-50 263.9 29.9)"/><ellipse cx="503.1" cy="36.6" rx="0.9" ry="0.6" fill="#a6a6a6" opacity="0.7" transform="rotate(-50 503.1 36.6)"/><ellipse cx="401.2" cy="37.5" rx="0.8" ry="0.3" fill="#d4d4d4" opacity="0.7" transform="rotate(-50 401.2 37.5)"/><ellipse cx="169.6" cy="43.5" rx="1.3" ry="0.7" fill="#a6a6a6" opacity="0.7" transform="rotate(-50 169.6 43.5)"/><ellipse cx="261.3" cy="39.3" rx="1.2" ry="0.6" fill="#d4d4d4" opacity="0.7" transform="rotate(-50 261.3 39.3)"/><ellipse cx="387.7" cy="41.3" rx="1.2" ry="0.6" fill="#d4d4d4" opacity="0.7" transform="rotate(-50 387.7 41.3)"/><ellipse cx="393.9" cy="41.0" rx="0.9" ry="0.4" fill="#dcdcdc" opacity="0.7" transform="rotate(-50 393.9 41.0)"/><ellipse cx="405.0" cy="47.4" rx="1.3" ry="0.6" fill="#aeaeae" opacity="0.7" transform="rotate(-50 405.0 47.4)"/><ellipse cx="367.3" cy="31.3" rx="1.0" ry="0.3" fill="#dcdcdc" opacity="0.7" transform="rotate(-50 367.3 31.3)"/><ellipse cx="488.9" cy="38.0" rx="1.5" ry="0.4" fill="#d4d4d4" opacity="0.7" transform="rotate(-50 488.9 38.0)"/><ellipse cx="380.5" cy="44.5" rx="1.4" ry="0.7" fill="#dcdcdc" opacity="0.7" transform="rotate(-50 380.5 44.5)"/><ellipse cx="89.5" cy="31.3" rx="0.6" ry="0.6" fill="#aeaeae" opacity="0.7" transform="rotate(-50 89.5 31.3)"/><ellipse cx="532.5" cy="38.0" rx="1.4" ry="0.5" fill="#a6a6a6" opacity="0.7" transform="rotate(-50 532.5 38.0)"/><ellipse cx="141.8" cy="36.9" rx="1.2" ry="0.6" fill="#a6a6a6" opacity="0.7" transform="rotate(-50 141.8 36.9)"/><ellipse cx="310.0" cy="35.3" rx="0.7" ry="0.6" fill="#dcdcdc" opacity="0.7" transform="rotate(-50 310.0 35.3)"/><ellipse cx="241.4" cy="44.1" rx="1.3" ry="0.5" fill="#a6a6a6" opacity="0.7" transform="rotate(-50 241.4 44.1)"/><ellipse cx="371.5" cy="31.3" rx="0.9" ry="0.3" fill="#dcdcdc" opacity="0.7" transform="rotate(-50 371.5 31.3)"/><ellipse cx="255.3" cy="35.5" rx="1.2" ry="0.5" fill="#d4d4d4" opacity="0.7" transform="rotate(-50 255.3 35.5)"/><ellipse cx="91.0" cy="32.6" rx="1.5" ry="0.5" fill="#dcdcdc" opacity="0.7" transform="rotate(-50 91.0 32.6)"/><ellipse cx="149.2" cy="45.0" rx="1.0" ry="0.4" fill="#dcdcdc" opacity="0.7" transform="rotate(-50 149.2 45.0)"/><ellipse cx="526.5" cy="26.7" rx="0.6" ry="0.6" fill="#d4d4d4" opacity="0.7" transform="rotate(-50 526.5 26.7)"/><ellipse cx="415.7" cy="45.4" rx="0.8" ry="0.6" fill="#aeaeae" opacity="0.7" transform="rotate(-50 415.7 45.4)"/><ellipse cx="467.8" cy="45.4" rx="1.6" ry="0.6" fill="#dcdcdc" opacity="0.7" transform="rotate(-50 467.8 45.4)"/><ellipse cx="377.9" cy="44.5" rx="0.8" ry="0.6" fill="#dcdcdc" opacity="0.7" transform="rotate(-50 377.9 44.5)"/><ellipse cx="175.0" cy="34.4" rx="1.6" ry="0.6" fill="#b6b6b6" opacity="0.7" transform="rotate(-50 175.0 34.4)"/><ellipse cx="288.7" cy="45.1" rx="0.8" ry="0.6" fill="#b6b6b6" opacity="0.7" transform="rotate(-50 288.7 45.1)"/><ellipse cx="203.1" cy="37.1" rx="1.2" ry="0.6" fill="#e2e2e2" opacity="0.7" transform="rotate(-50 203.1 37.1)"/><ellipse cx="225.5" cy="48.2" rx="0.5" ry="0.6" fill="#dcdcdc" opacity="0.7" transform="rotate(-50 225.5 48.2)"/><ellipse cx="514.0" cy="44.6" rx="1.0" ry="0.4" fill="#aeaeae" opacity="0.7" transform="rotate(-50 514.0 44.6)"/><ellipse cx="342.3" cy="41.4" rx="1.5" ry="0.6" fill="#aeaeae" opacity="0.7" transform="rotate(-50 342.3 41.4)"/><ellipse cx="165.8" cy="27.5" rx="1.4" ry="0.4" fill="#aeaeae" opacity="0.7" transform="rotate(-50 165.8 27.5)"/><ellipse cx="273.0" cy="44.6" rx="1.5" ry="0.6" fill="#aeaeae" opacity="0.7" transform="rotate(-50 273.0 44.6)"/><ellipse cx="122.2" cy="47.3" rx="1.6" ry="0.3" fill="#e2e2e2" opacity="0.7" transform="rotate(-50 122.2 47.3)"/><ellipse cx="511.8" cy="38.7" rx="1.4" ry="0.4" fill="#d4d4d4" opacity="0.7" transform="rotate(-50 511.8 38.7)"/><ellipse cx="400.9" cy="38.3" rx="1.4" ry="0.6" fill="#d4d4d4" opacity="0.7" transform="rotate(-50 400.9 38.3)"/><ellipse cx="95.1" cy="28.0" rx="0.7" ry="0.4" fill="#dcdcdc" opacity="0.7" transform="rotate(-50 95.1 28.0)"/><ellipse cx="294.8" cy="26.5" rx="1.5" ry="0.6" fill="#dcdcdc" opacity="0.7" transform="rotate(-50 294.8 26.5)"/><ellipse cx="163.9" cy="29.1" rx="1.4" ry="0.3" fill="#e2e2e2" opacity="0.7" transform="rotate(-50 163.9 29.1)"/><ellipse cx="479.4" cy="36.7" rx="1.0" ry="0.4" fill="#e2e2e2" opacity="0.7" transform="rotate(-50 479.4 36.7)"/><ellipse cx="280.3" cy="35.6" rx="0.5" ry="0.6" fill="#d4d4d4" opacity="0.7" transform="rotate(-50 280.3 35.6)"/><ellipse cx="370.8" cy="25.7" rx="0.5" ry="0.6" fill="#e2e2e2" opacity="0.7" transform="rotate(-50 370.8 25.7)"/><ellipse cx="563.5" cy="45.2" rx="1.0" ry="0.5" fill="#a6a6a6" opacity="0.7" transform="rotate(-50 563.5 45.2)"/><ellipse cx="509.6" cy="25.8" rx="0.9" ry="0.4" fill="#d4d4d4" opacity="0.7" transform="rotate(-50 509.6 25.8)"/><ellipse cx="83.2" cy="41.5" rx="1.0" ry="0.5" fill="#b6b6b6" opacity="0.7" transform="rotate(-50 83.2 41.5)"/><ellipse cx="442.2" cy="30.3" rx="0.8" ry="0.4" fill="#dcdcdc" opacity="0.7" transform="rotate(-50 442.2 30.3)"/><ellipse cx="61.0" cy="32.2" rx="1.4" ry="0.5" fill="#b6b6b6" opacity="0.7" transform="rotate(-50 61.0 32.2)"/><ellipse cx="300.5" cy="31.8" rx="0.8" ry="0.4" fill="#e2e2e2" opacity="0.7" transform="rotate(-50 300.5 31.8)"/><ellipse cx="294.4" cy="27.9" rx="0.8" ry="0.4" fill="#aeaeae" opacity="0.7" transform="rotate(-50 294.4 27.9)"/><ellipse cx="344.4" cy="40.9" rx="0.9" ry="0.5" fill="#a6a6a6" opacity="0.7" transform="rotate(-50 344.4 40.9)"/><ellipse cx="248.6" cy="39.4" rx="0.8" ry="0.3" fill="#dcdcdc" opacity="0.7" transform="rotate(-50 248.6 39.4)"/><ellipse cx="133.9" cy="48.0" rx="1.3" ry="0.3" fill="#e2e2e2" opacity="0.7" transform="rotate(-50 133.9 48.0)"/><ellipse cx="298.9" cy="38.6" rx="1.1" ry="0.6" fill="#dcdcdc" opacity="0.7" transform="rotate(-50 298.9 38.6)"/><ellipse cx="402.8" cy="39.9" rx="0.5" ry="0.3" fill="#d4d4d4" opacity="0.7" transform="rotate(-50 402.8 39.9)"/><ellipse cx="369.4" cy="40.6" rx="0.5" ry="0.4" fill="#aeaeae" opacity="0.7" transform="rotate(-50 369.4 40.6)"/><ellipse cx="52.6" cy="44.4" rx="0.4" ry="0.6" fill="#d4d4d4" opacity="0.7" transform="rotate(-50 52.6 44.4)"/><ellipse cx="106.6" cy="32.7" rx="0.7" ry="0.4" fill="#d4d4d4" opacity="0.7" transform="rotate(-50 106.6 32.7)"/><ellipse cx="257.0" cy="33.0" rx="1.1" ry="0.5" fill="#dcdcdc" opacity="0.7" transform="rotate(-50 257.0 33.0)"/><ellipse cx="518.2" cy="37.4" rx="0.4" ry="0.3" fill="#e2e2e2" opacity="0.7" transform="rotate(-50 518.2 37.4)"/><ellipse cx="463.3" cy="39.4" rx="0.9" ry="0.3" fill="#dcdcdc" opacity="0.7" transform="rotate(-50 463.3 39.4)"/><ellipse cx="238.6" cy="39.8" rx="1.6" ry="0.5" fill="#d4d4d4" opacity="0.7" transform="rotate(-50 238.6 39.8)"/><ellipse cx="252.0" cy="27.6" rx="1.0" ry="0.7" fill="#d4d4d4" opacity="0.7" transform="rotate(-50 252.0 27.6)"/><ellipse cx="365.9" cy="35.7" rx="1.2" ry="0.3" fill="#a6a6a6" opacity="0.7" transform="rotate(-50 365.9 35.7)"/><ellipse cx="546.1" cy="27.2" rx="0.6" ry="0.3" fill="#a6a6a6" opacity="0.7" transform="rotate(-50 546.1 27.2)"/><ellipse cx="415.0" cy="31.1" rx="1.3" ry="0.7" fill="#d4d4d4" opacity="0.7" transform="rotate(-50 415.0 31.1)"/><ellipse cx="227.3" cy="43.7" rx="1.4" ry="0.6" fill="#d4d4d4" opacity="0.7" transform="rotate(-50 227.3 43.7)"/><ellipse cx="77.8" cy="40.7" rx="1.0" ry="0.6" fill="#d4d4d4" opacity="0.7" transform="rotate(-50 77.8 40.7)"/><ellipse cx="505.6" cy="47.8" rx="1.3" ry="0.3" fill="#a6a6a6" opacity="0.7" transform="rotate(-50 505.6 47.8)"/><ellipse cx="40.8" cy="41.3" rx="0.5" ry="0.4" fill="#e2e2e2" opacity="0.7" transform="rotate(-50 40.8 41.3)"/><ellipse cx="420.3" cy="29.1" rx="1.1" ry="0.4" fill="#dcdcdc" opacity="0.7" transform="rotate(-50 420.3 29.1)"/><ellipse cx="536.8" cy="43.2" rx="1.2" ry="0.4" fill="#dcdcdc" opacity="0.7" transform="rotate(-50 536.8 43.2)"/><ellipse cx="456.4" cy="34.1" rx="0.6" ry="0.6" fill="#d4d4d4" opacity="0.7" transform="rotate(-50 456.4 34.1)"/><ellipse cx="286.3" cy="44.5" rx="1.5" ry="0.6" fill="#dcdcdc" opacity="0.7" transform="rotate(-50 286.3 44.5)"/><ellipse cx="334.0" cy="32.3" rx="1.1" ry="0.6" fill="#a6a6a6" opacity="0.7" transform="rotate(-50 334.0 32.3)"/><ellipse cx="458.8" cy="40.0" rx="1.3" ry="0.3" fill="#e2e2e2" opacity="0.7" transform="rotate(-50 458.8 40.0)"/><ellipse cx="113.2" cy="45.8" rx="0.9" ry="0.7" fill="#e2e2e2" opacity="0.7" transform="rotate(-50 113.2 45.8)"/><ellipse cx="233.0" cy="42.1" rx="1.3" ry="0.4" fill="#e2e2e2" opacity="0.7" transform="rotate(-50 233.0 42.1)"/><ellipse cx="272.6" cy="42.2" rx="0.7" ry="0.5" fill="#b6b6b6" opacity="0.7" transform="rotate(-50 272.6 42.2)"/><ellipse cx="344.5" cy="45.4" rx="0.7" ry="0.4" fill="#a6a6a6" opacity="0.7" transform="rotate(-50 344.5 45.4)"/><ellipse cx="505.9" cy="49.8" rx="0.7" ry="0.6" fill="#aeaeae" opacity="0.7" transform="rotate(-50 505.9 49.8)"/><ellipse cx="461.5" cy="42.1" rx="0.8" ry="0.3" fill="#dcdcdc" opacity="0.7" transform="rotate(-50 461.5 42.1)"/><ellipse cx="327.0" cy="44.9" rx="1.3" ry="0.6" fill="#aeaeae" opacity="0.7" transform="rotate(-50 327.0 44.9)"/><ellipse cx="554.6" cy="32.7" rx="1.2" ry="0.5" fill="#a6a6a6" opacity="0.7" transform="rotate(-50 554.6 32.7)"/><ellipse cx="142.7" cy="31.4" rx="1.3" ry="0.5" fill="#a6a6a6" opacity="0.7" transform="rotate(-50 142.7 31.4)"/><ellipse cx="79.6" cy="45.2" rx="0.7" ry="0.5" fill="#a6a6a6" opacity="0.7" transform="rotate(-50 79.6 45.2)"/><ellipse cx="509.3" cy="47.1" rx="0.8" ry="0.5" fill="#e2e2e2" opacity="0.7" transform="rotate(-50 509.3 47.1)"/><ellipse cx="140.2" cy="30.3" rx="0.6" ry="0.6" fill="#a6a6a6" opacity="0.7" transform="rotate(-50 140.2 30.3)"/><ellipse cx="225.7" cy="39.1" rx="1.3" ry="0.6" fill="#dcdcdc" opacity="0.7" transform="rotate(-50 225.7 39.1)"/><ellipse cx="163.8" cy="48.1" rx="0.8" ry="0.3" fill="#dcdcdc" opacity="0.7" transform="rotate(-50 163.8 48.1)"/><ellipse cx="369.0" cy="44.7" rx="0.8" ry="0.3" fill="#aeaeae" opacity="0.7" transform="rotate(-50 369.0 44.7)"/><ellipse cx="182.0" cy="40.2" rx="0.4" ry="0.7" fill="#a6a6a6" opacity="0.7" transform="rotate(-50 182.0 40.2)"/><ellipse cx="492.9" cy="37.2" rx="0.7" ry="0.7" fill="#e2e2e2" opacity="0.7" transform="rotate(-50 492.9 37.2)"/><ellipse cx="181.6" cy="27.4" rx="1.3" ry="0.6" fill="#dcdcdc" opacity="0.7" transform="rotate(-50 181.6 27.4)"/><ellipse cx="544.6" cy="31.3" rx="0.8" ry="0.7" fill="#a6a6a6" opacity="0.7" transform="rotate(-50 544.6 31.3)"/><ellipse cx="233.8" cy="25.7" rx="1.1" ry="0.6" fill="#a6a6a6" opacity="0.7" transform="rotate(-50 233.8 25.7)"/><ellipse cx="276.3" cy="48.7" rx="1.4" ry="0.6" fill="#a6a6a6" opacity="0.7" transform="rotate(-50 276.3 48.7)"/><ellipse cx="522.7" cy="42.7" rx="0.7" ry="0.5" fill="#a6a6a6" opacity="0.7" transform="rotate(-50 522.7 42.7)"/><ellipse cx="373.2" cy="48.9" rx="1.0" ry="0.4" fill="#d4d4d4" opacity="0.7" transform="rotate(-50 373.2 48.9)"/><ellipse cx="484.2" cy="34.3" rx="1.6" ry="0.4" fill="#aeaeae" opacity="0.7" transform="rotate(-50 484.2 34.3)"/><ellipse cx="53.5" cy="31.4" rx="0.5" ry="0.5" fill="#b6b6b6" opacity="0.7" transform="rotate(-50 53.5 31.4)"/><ellipse cx="47.8" cy="48.0" rx="1.3" ry="0.6" fill="#b6b6b6" opacity="0.7" transform="rotate(-50 47.8 48.0)"/><ellipse cx="376.4" cy="49.6" rx="0.5" ry="0.4" fill="#a6a6a6" opacity="0.7" transform="rotate(-50 376.4 49.6)"/><ellipse cx="36.1" cy="30.0" rx="0.8" ry="0.5" fill="#d4d4d4" opacity="0.7" transform="rotate(-50 36.1 30.0)"/><ellipse cx="435.4" cy="27.6" rx="0.8" ry="0.5" fill="#b6b6b6" opacity="0.7" transform="rotate(-50 435.4 27.6)"/><ellipse cx="232.1" cy="34.5" rx="0.7" ry="0.4" fill="#dcdcdc" opacity="0.7" transform="rotate(-50 232.1 34.5)"/><ellipse cx="392.8" cy="25.3" rx="1.5" ry="0.6" fill="#d4d4d4" opacity="0.7" transform="rotate(-50 392.8 25.3)"/><ellipse cx="116.3" cy="45.8" rx="1.5" ry="0.6" fill="#a6a6a6" opacity="0.7" transform="rotate(-50 116.3 45.8)"/><ellipse cx="504.9" cy="28.5" rx="1.5" ry="0.7" fill="#dcdcdc" opacity="0.7" transform="rotate(-50 504.9 28.5)"/><ellipse cx="237.5" cy="25.5" rx="0.9" ry="0.4" fill="#a6a6a6" opacity="0.7" transform="rotate(-50 237.5 25.5)"/><ellipse cx="470.0" cy="36.9" rx="0.8" ry="0.4" fill="#d4d4d4" opacity="0.7" transform="rotate(-50 470.0 36.9)"/><ellipse cx="423.8" cy="29.5" rx="1.1" ry="0.4" fill="#dcdcdc" opacity="0.7" transform="rotate(-50 423.8 29.5)"/><ellipse cx="495.4" cy="31.7" rx="0.7" ry="0.3" fill="#dcdcdc" opacity="0.7" transform="rotate(-50 495.4 31.7)"/><ellipse cx="336.2" cy="32.4" rx="0.7" ry="0.3" fill="#aeaeae" opacity="0.7" transform="rotate(-50 336.2 32.4)"/><ellipse cx="275.2" cy="37.1" rx="1.6" ry="0.3" fill="#aeaeae" opacity="0.7" transform="rotate(-50 275.2 37.1)"/><ellipse cx="508.3" cy="41.7" rx="1.1" ry="0.6" fill="#aeaeae" opacity="0.7" transform="rotate(-50 508.3 41.7)"/><ellipse cx="96.3" cy="43.9" rx="0.9" ry="0.4" fill="#b6b6b6" opacity="0.7" transform="rotate(-50 96.3 43.9)"/><ellipse cx="159.7" cy="31.0" rx="0.7" ry="0.7" fill="#dcdcdc" opacity="0.7" transform="rotate(-50 159.7 31.0)"/><ellipse cx="63.5" cy="43.2" rx="0.6" ry="0.6" fill="#b6b6b6" opacity="0.7" transform="rotate(-50 63.5 43.2)"/><ellipse cx="267.8" cy="37.7" rx="0.6" ry="0.3" fill="#e2e2e2" opacity="0.7" transform="rotate(-50 267.8 37.7)"/><ellipse cx="474.9" cy="38.2" rx="0.8" ry="0.3" fill="#aeaeae" opacity="0.7" transform="rotate(-50 474.9 38.2)"/><ellipse cx="250.1" cy="31.9" rx="0.6" ry="0.4" fill="#aeaeae" opacity="0.7" transform="rotate(-50 250.1 31.9)"/><ellipse cx="442.1" cy="42.8" rx="1.1" ry="0.6" fill="#aeaeae" opacity="0.7" transform="rotate(-50 442.1 42.8)"/><ellipse cx="505.2" cy="43.3" rx="0.6" ry="0.4" fill="#b6b6b6" opacity="0.7" transform="rotate(-50 505.2 43.3)"/><ellipse cx="388.7" cy="40.7" rx="1.1" ry="0.4" fill="#aeaeae" opacity="0.7" transform="rotate(-50 388.7 40.7)"/><ellipse cx="67.9" cy="43.3" rx="1.4" ry="0.7" fill="#dcdcdc" opacity="0.7" transform="rotate(-50 67.9 43.3)"/><ellipse cx="308.3" cy="33.7" rx="1.4" ry="0.6" fill="#b6b6b6" opacity="0.7" transform="rotate(-50 308.3 33.7)"/><ellipse cx="294.8" cy="25.4" rx="0.6" ry="0.6" fill="#dcdcdc" opacity="0.7" transform="rotate(-50 294.8 25.4)"/><ellipse cx="164.9" cy="39.1" rx="0.4" ry="0.6" fill="#b6b6b6" opacity="0.7" transform="rotate(-50 164.9 39.1)"/><ellipse cx="338.3" cy="46.5" rx="1.0" ry="0.5" fill="#b6b6b6" opacity="0.7" transform="rotate(-50 338.3 46.5)"/><ellipse cx="306.8" cy="28.0" rx="0.7" ry="0.6" fill="#d4d4d4" opacity="0.7" transform="rotate(-50 306.8 28.0)"/><ellipse cx="517.6" cy="44.5" rx="1.1" ry="0.7" fill="#dcdcdc" opacity="0.7" transform="rotate(-50 517.6 44.5)"/><ellipse cx="187.8" cy="27.7" rx="1.0" ry="0.5" fill="#d4d4d4" opacity="0.7" transform="rotate(-50 187.8 27.7)"/><ellipse cx="314.7" cy="38.4" rx="0.7" ry="0.3" fill="#a6a6a6" opacity="0.7" transform="rotate(-50 314.7 38.4)"/><ellipse cx="361.7" cy="29.2" rx="0.7" ry="0.6" fill="#b6b6b6" opacity="0.7" transform="rotate(-50 361.7 29.2)"/><ellipse cx="49.0" cy="27.4" rx="1.3" ry="0.4" fill="#d4d4d4" opacity="0.7" transform="rotate(-50 49.0 27.4)"/><ellipse cx="477.6" cy="40.9" rx="1.0" ry="0.6" fill="#dcdcdc" opacity="0.7" transform="rotate(-50 477.6 40.9)"/><ellipse cx="87.6" cy="46.7" rx="0.6" ry="0.4" fill="#d4d4d4" opacity="0.7" transform="rotate(-50 87.6 46.7)"/><ellipse cx="279.8" cy="39.6" rx="0.5" ry="0.3" fill="#b6b6b6" opacity="0.7" transform="rotate(-50 279.8 39.6)"/><ellipse cx="502.6" cy="38.5" rx="1.4" ry="0.4" fill="#aeaeae" opacity="0.7" transform="rotate(-50 502.6 38.5)"/><ellipse cx="337.2" cy="43.7" rx="1.5" ry="0.3" fill="#aeaeae" opacity="0.7" transform="rotate(-50 337.2 43.7)"/><ellipse cx="370.2" cy="42.3" rx="1.4" ry="0.5" fill="#e2e2e2" opacity="0.7" transform="rotate(-50 370.2 42.3)"/><ellipse cx="243.1" cy="48.5" rx="0.8" ry="0.4" fill="#b6b6b6" opacity="0.7" transform="rotate(-50 243.1 48.5)"/><ellipse cx="210.9" cy="35.9" rx="1.4" ry="0.7" fill="#e2e2e2" opacity="0.7" transform="rotate(-50 210.9 35.9)"/><ellipse cx="465.8" cy="46.2" rx="0.8" ry="0.4" fill="#a6a6a6" opacity="0.7" transform="rotate(-50 465.8 46.2)"/><ellipse cx="394.2" cy="33.8" rx="1.2" ry="0.3" fill="#dcdcdc" opacity="0.7" transform="rotate(-50 394.2 33.8)"/><ellipse cx="90.9" cy="29.7" rx="0.9" ry="0.5" fill="#b6b6b6" opacity="0.7" transform="rotate(-50 90.9 29.7)"/><ellipse cx="44.1" cy="28.5" rx="1.3" ry="0.7" fill="#dcdcdc" opacity="0.7" transform="rotate(-50 44.1 28.5)"/><ellipse cx="369.2" cy="45.2" rx="0.4" ry="0.6" fill="#a6a6a6" opacity="0.7" transform="rotate(-50 369.2 45.2)"/><ellipse cx="174.1" cy="42.0" rx="1.2" ry="0.6" fill="#b6b6b6" opacity="0.7" transform="rotate(-50 174.1 42.0)"/><ellipse cx="52.0" cy="27.5" rx="1.0" ry="0.5" fill="#a6a6a6" opacity="0.7" transform="rotate(-50 52.0 27.5)"/><ellipse cx="537.9" cy="32.2" rx="0.8" ry="0.4" fill="#b6b6b6" opacity="0.7" transform="rotate(-50 537.9 32.2)"/><ellipse cx="65.0" cy="49.0" rx="1.5" ry="0.3" fill="#e2e2e2" opacity="0.7" transform="rotate(-50 65.0 49.0)"/><ellipse cx="346.4" cy="48.3" rx="0.5" ry="0.4" fill="#dcdcdc" opacity="0.7" transform="rotate(-50 346.4 48.3)"/><ellipse cx="188.9" cy="35.2" rx="0.7" ry="0.6" fill="#b6b6b6" opacity="0.7" transform="rotate(-50 188.9 35.2)"/><ellipse cx="426.2" cy="32.2" rx="1.1" ry="0.5" fill="#dcdcdc" opacity="0.7" transform="rotate(-50 426.2 32.2)"/><ellipse cx="378.3" cy="30.0" rx="0.8" ry="0.7" fill="#d4d4d4" opacity="0.7" transform="rotate(-50 378.3 30.0)"/><ellipse cx="194.3" cy="36.9" rx="0.4" ry="0.4" fill="#b6b6b6" opacity="0.7" transform="rotate(-50 194.3 36.9)"/><ellipse cx="133.3" cy="38.6" rx="0.9" ry="0.7" fill="#e2e2e2" opacity="0.7" transform="rotate(-50 133.3 38.6)"/><ellipse cx="119.2" cy="48.8" rx="1.1" ry="0.5" fill="#b6b6b6" opacity="0.7" transform="rotate(-50 119.2 48.8)"/><ellipse cx="184.2" cy="49.7" rx="0.5" ry="0.3" fill="#b6b6b6" opacity="0.7" transform="rotate(-50 184.2 49.7)"/><ellipse cx="325.6" cy="40.1" rx="0.9" ry="0.3" fill="#b6b6b6" opacity="0.7" transform="rotate(-50 325.6 40.1)"/><ellipse cx="239.0" cy="36.0" rx="1.3" ry="0.5" fill="#d4d4d4" opacity="0.7" transform="rotate(-50 239.0 36.0)"/><ellipse cx="558.3" cy="41.9" rx="0.9" ry="0.6" fill="#aeaeae" opacity="0.7" transform="rotate(-50 558.3 41.9)"/><ellipse cx="107.5" cy="30.1" rx="1.4" ry="0.6" fill="#e2e2e2" opacity="0.7" transform="rotate(-50 107.5 30.1)"/><ellipse cx="307.9" cy="43.5" rx="1.5" ry="0.7" fill="#d4d4d4" opacity="0.7" transform="rotate(-50 307.9 43.5)"/><ellipse cx="175.7" cy="40.8" rx="1.5" ry="0.4" fill="#d4d4d4" opacity="0.7" transform="rotate(-50 175.7 40.8)"/><ellipse cx="495.4" cy="25.1" rx="1.1" ry="0.5" fill="#e2e2e2" opacity="0.7" transform="rotate(-50 495.4 25.1)"/><ellipse cx="544.2" cy="39.3" rx="1.4" ry="0.4" fill="#dcdcdc" opacity="0.7" transform="rotate(-50 544.2 39.3)"/><ellipse cx="363.0" cy="27.8" rx="1.2" ry="0.4" fill="#dcdcdc" opacity="0.7" transform="rotate(-50 363.0 27.8)"/><ellipse cx="220.2" cy="33.8" rx="1.1" ry="0.5" fill="#e2e2e2" opacity="0.7" transform="rotate(-50 220.2 33.8)"/><ellipse cx="204.0" cy="44.7" rx="0.9" ry="0.4" fill="#dcdcdc" opacity="0.7" transform="rotate(-50 204.0 44.7)"/><ellipse cx="318.1" cy="45.1" rx="1.1" ry="0.5" fill="#dcdcdc" opacity="0.7" transform="rotate(-50 318.1 45.1)"/><ellipse cx="79.7" cy="48.0" rx="1.6" ry="0.5" fill="#b6b6b6" opacity="0.7" transform="rotate(-50 79.7 48.0)"/><ellipse cx="161.8" cy="33.1" rx="1.5" ry="0.7" fill="#dcdcdc" opacity="0.7" transform="rotate(-50 161.8 33.1)"/><ellipse cx="46.6" cy="31.4" rx="0.8" ry="0.5" fill="#dcdcdc" opacity="0.7" transform="rotate(-50 46.6 31.4)"/><ellipse cx="198.9" cy="40.5" rx="1.0" ry="0.5" fill="#dcdcdc" opacity="0.7" transform="rotate(-50 198.9 40.5)"/><ellipse cx="396.9" cy="34.7" rx="0.4" ry="0.6" fill="#b6b6b6" opacity="0.7" transform="rotate(-50 396.9 34.7)"/><ellipse cx="273.6" cy="25.3" rx="1.0" ry="0.3" fill="#a6a6a6" opacity="0.7" transform="rotate(-50 273.6 25.3)"/><ellipse cx="231.8" cy="35.0" rx="1.5" ry="0.4" fill="#e2e2e2" opacity="0.7" transform="rotate(-50 231.8 35.0)"/><ellipse cx="132.9" cy="35.5" rx="0.9" ry="0.5" fill="#dcdcdc" opacity="0.7" transform="rotate(-50 132.9 35.5)"/><ellipse cx="561.9" cy="33.6" rx="1.3" ry="0.3" fill="#e2e2e2" opacity="0.7" transform="rotate(-50 561.9 33.6)"/><ellipse cx="225.6" cy="34.2" rx="1.4" ry="0.5" fill="#a6a6a6" opacity="0.7" transform="rotate(-50 225.6 34.2)"/><ellipse cx="91.7" cy="47.4" rx="0.8" ry="0.7" fill="#d4d4d4" opacity="0.7" transform="rotate(-50 91.7 47.4)"/><ellipse cx="303.2" cy="49.3" rx="0.6" ry="0.4" fill="#d4d4d4" opacity="0.7" transform="rotate(-50 303.2 49.3)"/><ellipse cx="304.7" cy="37.6" rx="0.9" ry="0.3" fill="#aeaeae" opacity="0.7" transform="rotate(-50 304.7 37.6)"/><ellipse cx="333.0" cy="27.7" rx="1.6" ry="0.6" fill="#e2e2e2" opacity="0.7" transform="rotate(-50 333.0 27.7)"/><ellipse cx="55.5" cy="35.3" rx="0.8" ry="0.6" fill="#a6a6a6" opacity="0.7" transform="rotate(-50 55.5 35.3)"/><ellipse cx="35.1" cy="32.6" rx="1.1" ry="0.6" fill="#a6a6a6" opacity="0.7" transform="rotate(-50 35.1 32.6)"/><ellipse cx="137.4" cy="37.4" rx="1.1" ry="0.6" fill="#e2e2e2" opacity="0.7" transform="rotate(-50 137.4 37.4)"/><ellipse cx="508.5" cy="37.9" rx="1.1" ry="0.5" fill="#aeaeae" opacity="0.7" transform="rotate(-50 508.5 37.9)"/><ellipse cx="97.5" cy="28.9" rx="0.5" ry="0.3" fill="#e2e2e2" opacity="0.7" transform="rotate(-50 97.5 28.9)"/><ellipse cx="123.6" cy="38.1" rx="1.1" ry="0.6" fill="#dcdcdc" opacity="0.7" transform="rotate(-50 123.6 38.1)"/><ellipse cx="66.0" cy="25.3" rx="0.8" ry="0.6" fill="#e2e2e2" opacity="0.7" transform="rotate(-50 66.0 25.3)"/><ellipse cx="220.9" cy="29.2" rx="1.2" ry="0.6" fill="#b6b6b6" opacity="0.7" transform="rotate(-50 220.9 29.2)"/><ellipse cx="536.2" cy="26.6" rx="0.9" ry="0.5" fill="#aeaeae" opacity="0.7" transform="rotate(-50 536.2 26.6)"/><ellipse cx="62.0" cy="47.3" rx="1.3" ry="0.3" fill="#e2e2e2" opacity="0.7" transform="rotate(-50 62.0 47.3)"/><ellipse cx="62.0" cy="31.0" rx="0.5" ry="0.7" fill="#aeaeae" opacity="0.7" transform="rotate(-50 62.0 31.0)"/><ellipse cx="486.9" cy="32.9" rx="0.8" ry="0.5" fill="#dcdcdc" opacity="0.7" transform="rotate(-50 486.9 32.9)"/><ellipse cx="542.8" cy="37.4" rx="0.7" ry="0.5" fill="#a6a6a6" opacity="0.7" transform="rotate(-50 542.8 37.4)"/><ellipse cx="414.5" cy="30.5" rx="0.9" ry="0.6" fill="#b6b6b6" opacity="0.7" transform="rotate(-50 414.5 30.5)"/><ellipse cx="44.9" cy="46.7" rx="0.6" ry="0.4" fill="#a6a6a6" opacity="0.7" transform="rotate(-50 44.9 46.7)"/><ellipse cx="132.1" cy="49.3" rx="0.9" ry="0.4" fill="#b6b6b6" opacity="0.7" transform="rotate(-50 132.1 49.3)"/><ellipse cx="210.9" cy="46.8" rx="0.9" ry="0.3" fill="#b6b6b6" opacity="0.7" transform="rotate(-50 210.9 46.8)"/><ellipse cx="98.5" cy="45.6" rx="1.1" ry="0.5" fill="#b6b6b6" opacity="0.7" transform="rotate(-50 98.5 45.6)"/><ellipse cx="281.0" cy="33.6" rx="0.4" ry="0.6" fill="#dcdcdc" opacity="0.7" transform="rotate(-50 281.0 33.6)"/><ellipse cx="214.3" cy="28.9" rx="0.6" ry="0.4" fill="#d4d4d4" opacity="0.7" transform="rotate(-50 214.3 28.9)"/><ellipse cx="322.3" cy="44.7" rx="0.9" ry="0.6" fill="#e2e2e2" opacity="0.7" transform="rotate(-50 322.3 44.7)"/><ellipse cx="460.4" cy="29.0" rx="0.7" ry="0.5" fill="#b6b6b6" opacity="0.7" transform="rotate(-50 460.4 29.0)"/><ellipse cx="367.2" cy="39.5" rx="1.5" ry="0.5" fill="#b6b6b6" opacity="0.7" transform="rotate(-50 367.2 39.5)"/><ellipse cx="153.7" cy="36.3" rx="1.5" ry="0.7" fill="#aeaeae" opacity="0.7" transform="rotate(-50 153.7 36.3)"/><ellipse cx="349.5" cy="36.0" rx="1.0" ry="0.5" fill="#b6b6b6" opacity="0.7" transform="rotate(-50 349.5 36.0)"/><ellipse cx="303.9" cy="28.1" rx="1.2" ry="0.3" fill="#a6a6a6" opacity="0.7" transform="rotate(-50 303.9 28.1)"/><ellipse cx="485.3" cy="43.4" rx="0.4" ry="0.6" fill="#dcdcdc" opacity="0.7" transform="rotate(-50 485.3 43.4)"/><ellipse cx="110.0" cy="25.4" rx="0.5" ry="0.4" fill="#d4d4d4" opacity="0.7" transform="rotate(-50 110.0 25.4)"/><ellipse cx="484.9" cy="33.0" rx="1.5" ry="0.3" fill="#d4d4d4" opacity="0.7" transform="rotate(-50 484.9 33.0)"/><ellipse cx="518.3" cy="45.1" rx="0.6" ry="0.6" fill="#b6b6b6" opacity="0.7" transform="rotate(-50 518.3 45.1)"/><ellipse cx="79.7" cy="32.2" rx="0.9" ry="0.4" fill="#d4d4d4" opacity="0.7" transform="rotate(-50 79.7 32.2)"/><ellipse cx="481.4" cy="36.6" rx="1.5" ry="0.6" fill="#d4d4d4" opacity="0.7" transform="rotate(-50 481.4 36.6)"/><ellipse cx="103.2" cy="31.9" rx="0.8" ry="0.6" fill="#a6a6a6" opacity="0.7" transform="rotate(-50 103.2 31.9)"/><ellipse cx="399.9" cy="47.4" rx="1.2" ry="0.6" fill="#a6a6a6" opacity="0.7" transform="rotate(-50 399.9 47.4)"/><ellipse cx="164.9" cy="46.2" rx="1.5" ry="0.3" fill="#b6b6b6" opacity="0.7" transform="rotate(-50 164.9 46.2)"/><ellipse cx="187.8" cy="31.8" rx="1.3" ry="0.6" fill="#e2e2e2" opacity="0.7" transform="rotate(-50 187.8 31.8)"/><ellipse cx="54.5" cy="26.0" rx="0.9" ry="0.6" fill="#aeaeae" opacity="0.7" transform="rotate(-50 54.5 26.0)"/><ellipse cx="115.9" cy="43.5" rx="0.8" ry="0.6" fill="#e2e2e2" opacity="0.7" transform="rotate(-50 115.9 43.5)"/><ellipse cx="128.4" cy="46.0" rx="1.0" ry="0.5" fill="#e2e2e2" opacity="0.7" transform="rotate(-50 128.4 46.0)"/><ellipse cx="524.5" cy="41.8" rx="0.8" ry="0.3" fill="#e2e2e2" opacity="0.7" transform="rotate(-50 524.5 41.8)"/><ellipse cx="476.0" cy="44.4" rx="1.5" ry="0.7" fill="#b6b6b6" opacity="0.7" transform="rotate(-50 476.0 44.4)"/><ellipse cx="343.7" cy="42.4" rx="1.2" ry="0.3" fill="#aeaeae" opacity="0.7" transform="rotate(-50 343.7 42.4)"/><ellipse cx="202.2" cy="44.4" rx="1.3" ry="0.3" fill="#b6b6b6" opacity="0.7" transform="rotate(-50 202.2 44.4)"/><ellipse cx="401.9" cy="34.8" rx="1.1" ry="0.4" fill="#d4d4d4" opacity="0.7" transform="rotate(-50 401.9 34.8)"/><ellipse cx="313.0" cy="33.7" rx="0.9" ry="0.4" fill="#dcdcdc" opacity="0.7" transform="rotate(-50 313.0 33.7)"/><ellipse cx="300.1" cy="42.2" rx="1.2" ry="0.5" fill="#d4d4d4" opacity="0.7" transform="rotate(-50 300.1 42.2)"/><ellipse cx="392.3" cy="30.1" rx="1.0" ry="0.7" fill="#d4d4d4" opacity="0.7" transform="rotate(-50 392.3 30.1)"/><ellipse cx="100.8" cy="44.0" rx="1.5" ry="0.6" fill="#a6a6a6" opacity="0.7" transform="rotate(-50 100.8 44.0)"/><ellipse cx="329.9" cy="29.4" rx="1.6" ry="0.6" fill="#aeaeae" opacity="0.7" transform="rotate(-50 329.9 29.4)"/><ellipse cx="321.8" cy="31.2" rx="0.6" ry="0.4" fill="#a6a6a6" opacity="0.7" transform="rotate(-50 321.8 31.2)"/><ellipse cx="82.1" cy="40.9" rx="0.6" ry="0.6" fill="#aeaeae" opacity="0.7" transform="rotate(-50 82.1 40.9)"/><ellipse cx="388.9" cy="30.9" rx="0.4" ry="0.6" fill="#aeaeae" opacity="0.7" transform="rotate(-50 388.9 30.9)"/><ellipse cx="103.7" cy="41.0" rx="0.8" ry="0.7" fill="#d4d4d4" opacity="0.7" transform="rotate(-50 103.7 41.0)"/><ellipse cx="108.3" cy="39.1" rx="1.2" ry="0.3" fill="#b6b6b6" opacity="0.7" transform="rotate(-50 108.3 39.1)"/><ellipse cx="258.5" cy="48.5" rx="1.2" ry="0.5" fill="#d4d4d4" opacity="0.7" transform="rotate(-50 258.5 48.5)"/><ellipse cx="277.9" cy="44.2" rx="0.5" ry="0.4" fill="#aeaeae" opacity="0.7" transform="rotate(-50 277.9 44.2)"/><ellipse cx="224.4" cy="30.2" rx="1.5" ry="0.4" fill="#a6a6a6" opacity="0.7" transform="rotate(-50 224.4 30.2)"/><ellipse cx="91.7" cy="32.7" rx="0.6" ry="0.5" fill="#a6a6a6" opacity="0.7" transform="rotate(-50 91.7 32.7)"/><ellipse cx="335.2" cy="32.2" rx="0.5" ry="0.3" fill="#e2e2e2" opacity="0.7" transform="rotate(-50 335.2 32.2)"/><ellipse cx="559.8" cy="43.8" rx="1.3" ry="0.4" fill="#a6a6a6" opacity="0.7" transform="rotate(-50 559.8 43.8)"/><ellipse cx="425.4" cy="31.6" rx="1.0" ry="0.5" fill="#d4d4d4" opacity="0.7" transform="rotate(-50 425.4 31.6)"/><ellipse cx="133.8" cy="38.6" rx="0.8" ry="0.3" fill="#a6a6a6" opacity="0.7" transform="rotate(-50 133.8 38.6)"/><ellipse cx="184.9" cy="40.3" rx="1.2" ry="0.4" fill="#d4d4d4" opacity="0.7" transform="rotate(-50 184.9 40.3)"/><ellipse cx="163.6" cy="28.5" rx="0.4" ry="0.5" fill="#a6a6a6" opacity="0.7" transform="rotate(-50 163.6 28.5)"/><ellipse cx="110.1" cy="34.2" rx="1.0" ry="0.7" fill="#d4d4d4" opacity="0.7" transform="rotate(-50 110.1 34.2)"/><ellipse cx="395.2" cy="27.6" rx="1.4" ry="0.6" fill="#d4d4d4" opacity="0.7" transform="rotate(-50 395.2 27.6)"/><ellipse cx="206.5" cy="29.6" rx="0.8" ry="0.4" fill="#b6b6b6" opacity="0.7" transform="rotate(-50 206.5 29.6)"/><ellipse cx="325.7" cy="34.2" rx="0.7" ry="0.3" fill="#b6b6b6" opacity="0.7" transform="rotate(-50 325.7 34.2)"/><ellipse cx="334.0" cy="40.7" rx="0.9" ry="0.3" fill="#d4d4d4" opacity="0.7" transform="rotate(-50 334.0 40.7)"/><ellipse cx="147.9" cy="35.6" rx="0.6" ry="0.4" fill="#d4d4d4" opacity="0.7" transform="rotate(-50 147.9 35.6)"/><ellipse cx="341.6" cy="27.0" rx="0.7" ry="0.4" fill="#d4d4d4" opacity="0.7" transform="rotate(-50 341.6 27.0)"/><ellipse cx="371.1" cy="35.0" rx="1.4" ry="0.5" fill="#a6a6a6" opacity="0.7" transform="rotate(-50 371.1 35.0)"/><ellipse cx="148.9" cy="34.3" rx="1.4" ry="0.6" fill="#a6a6a6" opacity="0.7" transform="rotate(-50 148.9 34.3)"/><ellipse cx="450.9" cy="35.6" rx="0.5" ry="0.3" fill="#b6b6b6" opacity="0.7" transform="rotate(-50 450.9 35.6)"/><ellipse cx="410.4" cy="47.3" rx="0.9" ry="0.6" fill="#a6a6a6" opacity="0.7" transform="rotate(-50 410.4 47.3)"/><ellipse cx="471.6" cy="47.6" rx="0.9" ry="0.3" fill="#aeaeae" opacity="0.7" transform="rotate(-50 471.6 47.6)"/><ellipse cx="460.0" cy="41.9" rx="0.6" ry="0.3" fill="#e2e2e2" opacity="0.7" transform="rotate(-50 460.0 41.9)"/><ellipse cx="204.9" cy="36.5" rx="1.5" ry="0.6" fill="#e2e2e2" opacity="0.7" transform="rotate(-50 204.9 36.5)"/><ellipse cx="550.4" cy="49.0" rx="0.5" ry="0.6" fill="#e2e2e2" opacity="0.7" transform="rotate(-50 550.4 49.0)"/><ellipse cx="416.8" cy="33.3" rx="0.8" ry="0.5" fill="#d4d4d4" opacity="0.7" transform="rotate(-50 416.8 33.3)"/><ellipse cx="538.9" cy="37.0" rx="0.6" ry="0.6" fill="#d4d4d4" opacity="0.7" transform="rotate(-50 538.9 37.0)"/><ellipse cx="314.6" cy="40.8" rx="0.7" ry="0.6" fill="#aeaeae" opacity="0.7" transform="rotate(-50 314.6 40.8)"/><ellipse cx="400.1" cy="28.7" rx="0.8" ry="0.5" fill="#e2e2e2" opacity="0.7" transform="rotate(-50 400.1 28.7)"/><ellipse cx="254.1" cy="38.2" rx="0.9" ry="0.4" fill="#e2e2e2" opacity="0.7" transform="rotate(-50 254.1 38.2)"/><ellipse cx="153.7" cy="49.2" rx="1.1" ry="0.3" fill="#aeaeae" opacity="0.7" transform="rotate(-50 153.7 49.2)"/><ellipse cx="490.8" cy="31.3" rx="0.6" ry="0.6" fill="#a6a6a6" opacity="0.7" transform="rotate(-50 490.8 31.3)"/><ellipse cx="409.5" cy="30.7" rx="0.7" ry="0.5" fill="#dcdcdc" opacity="0.7" transform="rotate(-50 409.5 30.7)"/><ellipse cx="93.0" cy="37.8" rx="1.1" ry="0.6" fill="#e2e2e2" opacity="0.7" transform="rotate(-50 93.0 37.8)"/><ellipse cx="393.8" cy="45.0" rx="1.4" ry="0.5" fill="#aeaeae" opacity="0.7" transform="rotate(-50 393.8 45.0)"/><ellipse cx="412.5" cy="43.9" rx="1.2" ry="0.7" fill="#a6a6a6" opacity="0.7" transform="rotate(-50 412.5 43.9)"/><ellipse cx="306.5" cy="36.5" rx="0.9" ry="0.4" fill="#d4d4d4" opacity="0.7" transform="rotate(-50 306.5 36.5)"/><ellipse cx="542.8" cy="39.1" rx="0.6" ry="0.6" fill="#a6a6a6" opacity="0.7" transform="rotate(-50 542.8 39.1)"/><ellipse cx="63.6" cy="30.9" rx="0.5" ry="0.6" fill="#b6b6b6" opacity="0.7" transform="rotate(-50 63.6 30.9)"/><ellipse cx="540.4" cy="36.5" rx="1.2" ry="0.5" fill="#a6a6a6" opacity="0.7" transform="rotate(-50 540.4 36.5)"/><ellipse cx="504.9" cy="40.5" rx="1.1" ry="0.7" fill="#aeaeae" opacity="0.7" transform="rotate(-50 504.9 40.5)"/><ellipse cx="495.4" cy="29.2" rx="1.4" ry="0.6" fill="#d4d4d4" opacity="0.7" transform="rotate(-50 495.4 29.2)"/><ellipse cx="423.9" cy="25.3" rx="0.5" ry="0.4" fill="#b6b6b6" opacity="0.7" transform="rotate(-50 423.9 25.3)"/><ellipse cx="424.5" cy="48.7" rx="1.0" ry="0.6" fill="#d4d4d4" opacity="0.7" transform="rotate(-50 424.5 48.7)"/><ellipse cx="220.7" cy="33.9" rx="1.4" ry="0.3" fill="#b6b6b6" opacity="0.7" transform="rotate(-50 220.7 33.9)"/><ellipse cx="524.4" cy="41.9" rx="0.8" ry="0.6" fill="#b6b6b6" opacity="0.7" transform="rotate(-50 524.4 41.9)"/><ellipse cx="44.3" cy="49.7" rx="0.5" ry="0.3" fill="#dcdcdc" opacity="0.7" transform="rotate(-50 44.3 49.7)"/><ellipse cx="91.6" cy="45.0" rx="0.6" ry="0.7" fill="#aeaeae" opacity="0.7" transform="rotate(-50 91.6 45.0)"/><ellipse cx="497.0" cy="41.7" rx="1.1" ry="0.4" fill="#aeaeae" opacity="0.7" transform="rotate(-50 497.0 41.7)"/><ellipse cx="562.5" cy="44.0" rx="1.5" ry="0.3" fill="#b6b6b6" opacity="0.7" transform="rotate(-50 562.5 44.0)"/><ellipse cx="214.8" cy="28.8" rx="1.0" ry="0.3" fill="#e2e2e2" opacity="0.7" transform="rotate(-50 214.8 28.8)"/><ellipse cx="477.5" cy="26.9" rx="1.4" ry="0.6" fill="#e2e2e2" opacity="0.7" transform="rotate(-50 477.5 26.9)"/><ellipse cx="241.5" cy="36.9" rx="1.2" ry="0.5" fill="#aeaeae" opacity="0.7" transform="rotate(-50 241.5 36.9)"/><ellipse cx="154.7" cy="48.9" rx="0.5" ry="0.4" fill="#e2e2e2" opacity="0.7" transform="rotate(-50 154.7 48.9)"/><ellipse cx="147.9" cy="47.3" rx="1.1" ry="0.4" fill="#e2e2e2" opacity="0.7" transform="rotate(-50 147.9 47.3)"/><ellipse cx="468.0" cy="43.2" rx="1.1" ry="0.5" fill="#b6b6b6" opacity="0.7" transform="rotate(-50 468.0 43.2)"/><ellipse cx="220.8" cy="25.1" rx="1.0" ry="0.4" fill="#e2e2e2" opacity="0.7" transform="rotate(-50 220.8 25.1)"/><ellipse cx="165.1" cy="46.9" rx="0.5" ry="0.4" fill="#e2e2e2" opacity="0.7" transform="rotate(-50 165.1 46.9)"/><ellipse cx="389.3" cy="31.8" rx="0.5" ry="0.7" fill="#b6b6b6" opacity="0.7" transform="rotate(-50 389.3 31.8)"/><ellipse cx="222.5" cy="39.3" rx="1.5" ry="0.7" fill="#e2e2e2" opacity="0.7" transform="rotate(-50 222.5 39.3)"/><ellipse cx="51.1" cy="39.0" rx="1.4" ry="0.6" fill="#a6a6a6" opacity="0.7" transform="rotate(-50 51.1 39.0)"/><ellipse cx="369.2" cy="40.9" rx="1.4" ry="0.6" fill="#b6b6b6" opacity="0.7" transform="rotate(-50 369.2 40.9)"/><ellipse cx="159.4" cy="44.9" rx="1.2" ry="0.4" fill="#aeaeae" opacity="0.7" transform="rotate(-50 159.4 44.9)"/><ellipse cx="438.3" cy="43.5" rx="1.4" ry="0.4" fill="#e2e2e2" opacity="0.7" transform="rotate(-50 438.3 43.5)"/><ellipse cx="496.5" cy="42.9" rx="0.5" ry="0.4" fill="#b6b6b6" opacity="0.7" transform="rotate(-50 496.5 42.9)"/><ellipse cx="204.6" cy="49.7" rx="1.0" ry="0.7" fill="#dcdcdc" opacity="0.7" transform="rotate(-50 204.6 49.7)"/><ellipse cx="462.7" cy="49.9" rx="0.6" ry="0.3" fill="#aeaeae" opacity="0.7" transform="rotate(-50 462.7 49.9)"/><ellipse cx="495.5" cy="36.3" rx="0.9" ry="0.6" fill="#dcdcdc" opacity="0.7" transform="rotate(-50 495.5 36.3)"/><ellipse cx="526.6" cy="39.7" rx="0.8" ry="0.4" fill="#aeaeae" opacity="0.7" transform="rotate(-50 526.6 39.7)"/><ellipse cx="418.9" cy="38.8" rx="0.5" ry="0.4" fill="#b6b6b6" opacity="0.7" transform="rotate(-50 418.9 38.8)"/><ellipse cx="524.1" cy="39.6" rx="1.1" ry="0.7" fill="#b6b6b6" opacity="0.7" transform="rotate(-50 524.1 39.6)"/><ellipse cx="222.6" cy="44.4" rx="1.3" ry="0.7" fill="#dcdcdc" opacity="0.7" transform="rotate(-50 222.6 44.4)"/><ellipse cx="478.3" cy="33.0" rx="0.7" ry="0.4" fill="#aeaeae" opacity="0.7" transform="rotate(-50 478.3 33.0)"/><ellipse cx="45.3" cy="29.1" rx="0.7" ry="0.3" fill="#b6b6b6" opacity="0.7" transform="rotate(-50 45.3 29.1)"/><ellipse cx="58.3" cy="36.2" rx="0.7" ry="0.5" fill="#e2e2e2" opacity="0.7" transform="rotate(-50 58.3 36.2)"/><ellipse cx="85.9" cy="31.0" rx="1.6" ry="0.5" fill="#a6a6a6" opacity="0.7" transform="rotate(-50 85.9 31.0)"/><ellipse cx="75.1" cy="45.2" rx="0.8" ry="0.4" fill="#e2e2e2" opacity="0.7" transform="rotate(-50 75.1 45.2)"/><ellipse cx="132.9" cy="38.4" rx="1.2" ry="0.7" fill="#a6a6a6" opacity="0.7" transform="rotate(-50 132.9 38.4)"/><polygon points="12.4,50 25.4,50 47.4,25 34.4,25" fill="url(#st)" opacity="0.60"/><line x1="33.4" y1="50" x2="55.4" y2="25" stroke="#a2a2a2" stroke-width="1.1" stroke-dasharray="2 1.5 1 2.5" opacity="0.60"/><line x1="9.4" y1="46" x2="27.4" y2="25" stroke="#adadad" stroke-width="0.9" stroke-dasharray="1.5 2 2.5 1.5" opacity="0.48"/><line x1="44.4" y1="44" x2="59.4" y2="27" stroke="#dcdcdc" stroke-width="1" stroke-dasharray="2 3" opacity="0.60"/><path d="M30.9 46.0 h3 M32.4 44.5 v3" stroke="#a8a8a8" stroke-width="0.7" opacity="0.60"/><path d="M34.9 32.0 h3 M36.4 30.5 v3" stroke="#a8a8a8" stroke-width="0.7" opacity="0.60"/><polygon points="69.6,50 82.6,50 104.6,25 91.6,25" fill="url(#st)" opacity="0.60"/><line x1="90.6" y1="50" x2="112.6" y2="25" stroke="#a2a2a2" stroke-width="1.1" stroke-dasharray="2 1.5 1 2.5" opacity="0.60"/><line x1="66.6" y1="46" x2="84.6" y2="25" stroke="#adadad" stroke-width="0.9" stroke-dasharray="1.5 2 2.5 1.5" opacity="0.48"/><line x1="101.6" y1="44" x2="116.6" y2="27" stroke="#dcdcdc" stroke-width="1" stroke-dasharray="2 3" opacity="0.60"/><path d="M88.1 46.0 h3 M89.6 44.5 v3" stroke="#a8a8a8" stroke-width="0.7" opacity="0.60"/><path d="M92.1 32.0 h3 M93.6 30.5 v3" stroke="#a8a8a8" stroke-width="0.7" opacity="0.60"/><polygon points="126.8,50 139.8,50 161.8,25 148.8,25" fill="url(#st)" opacity="0.60"/><line x1="147.8" y1="50" x2="169.8" y2="25" stroke="#a2a2a2" stroke-width="1.1" stroke-dasharray="2 1.5 1 2.5" opacity="0.60"/><line x1="123.8" y1="46" x2="141.8" y2="25" stroke="#adadad" stroke-width="0.9" stroke-dasharray="1.5 2 2.5 1.5" opacity="0.48"/><line x1="158.8" y1="44" x2="173.8" y2="27" stroke="#dcdcdc" stroke-width="1" stroke-dasharray="2 3" opacity="0.60"/><path d="M145.3 46.0 h3 M146.8 44.5 v3" stroke="#a8a8a8" stroke-width="0.7" opacity="0.60"/><path d="M149.3 32.0 h3 M150.8 30.5 v3" stroke="#a8a8a8" stroke-width="0.7" opacity="0.60"/><polygon points="184.0,50 197.0,50 219.0,25 206.0,25" fill="url(#st)" opacity="1.00"/><line x1="205.0" y1="50" x2="227.0" y2="25" stroke="#a2a2a2" stroke-width="1.1" stroke-dasharray="2 1.5 1 2.5" opacity="1.00"/><line x1="181.0" y1="46" x2="199.0" y2="25" stroke="#adadad" stroke-width="0.9" stroke-dasharray="1.5 2 2.5 1.5" opacity="0.80"/><line x1="216.0" y1="44" x2="231.0" y2="27" stroke="#dcdcdc" stroke-width="1" stroke-dasharray="2 3" opacity="1.00"/><path d="M202.5 46.0 h3 M204.0 44.5 v3" stroke="#a8a8a8" stroke-width="0.7" opacity="1.00"/><path d="M206.5 32.0 h3 M208.0 30.5 v3" stroke="#a8a8a8" stroke-width="0.7" opacity="1.00"/><polygon points="241.2,50 254.2,50 276.2,25 263.2,25" fill="url(#st)" opacity="1.00"/><line x1="262.2" y1="50" x2="284.2" y2="25" stroke="#a2a2a2" stroke-width="1.1" stroke-dasharray="2 1.5 1 2.5" opacity="1.00"/><line x1="238.2" y1="46" x2="256.2" y2="25" stroke="#adadad" stroke-width="0.9" stroke-dasharray="1.5 2 2.5 1.5" opacity="0.80"/><line x1="273.2" y1="44" x2="288.2" y2="27" stroke="#dcdcdc" stroke-width="1" stroke-dasharray="2 3" opacity="1.00"/><path d="M259.7 46.0 h3 M261.2 44.5 v3" stroke="#a8a8a8" stroke-width="0.7" opacity="1.00"/><path d="M263.7 32.0 h3 M265.2 30.5 v3" stroke="#a8a8a8" stroke-width="0.7" opacity="1.00"/><polygon points="298.4,50 311.4,50 333.4,25 320.4,25" fill="url(#st)" opacity="1.00"/><line x1="319.4" y1="50" x2="341.4" y2="25" stroke="#a2a2a2" stroke-width="1.1" stroke-dasharray="2 1.5 1 2.5" opacity="1.00"/><line x1="295.4" y1="46" x2="313.4" y2="25" stroke="#adadad" stroke-width="0.9" stroke-dasharray="1.5 2 2.5 1.5" opacity="0.80"/><line x1="330.4" y1="44" x2="345.4" y2="27" stroke="#dcdcdc" stroke-width="1" stroke-dasharray="2 3" opacity="1.00"/><path d="M316.9 46.0 h3 M318.4 44.5 v3" stroke="#a8a8a8" stroke-width="0.7" opacity="1.00"/><path d="M320.9 32.0 h3 M322.4 30.5 v3" stroke="#a8a8a8" stroke-width="0.7" opacity="1.00"/><polygon points="355.6,50 368.6,50 390.6,25 377.6,25" fill="url(#st)" opacity="1.00"/><line x1="376.6" y1="50" x2="398.6" y2="25" stroke="#a2a2a2" stroke-width="1.1" stroke-dasharray="2 1.5 1 2.5" opacity="1.00"/><line x1="352.6" y1="46" x2="370.6" y2="25" stroke="#adadad" stroke-width="0.9" stroke-dasharray="1.5 2 2.5 1.5" opacity="0.80"/><line x1="387.6" y1="44" x2="402.6" y2="27" stroke="#dcdcdc" stroke-width="1" stroke-dasharray="2 3" opacity="1.00"/><path d="M374.1 46.0 h3 M375.6 44.5 v3" stroke="#a8a8a8" stroke-width="0.7" opacity="1.00"/><path d="M378.1 32.0 h3 M379.6 30.5 v3" stroke="#a8a8a8" stroke-width="0.7" opacity="1.00"/><polygon points="412.8,50 425.8,50 447.8,25 434.8,25" fill="url(#st)" opacity="1.00"/><line x1="433.8" y1="50" x2="455.8" y2="25" stroke="#a2a2a2" stroke-width="1.1" stroke-dasharray="2 1.5 1 2.5" opacity="1.00"/><line x1="409.8" y1="46" x2="427.8" y2="25" stroke="#adadad" stroke-width="0.9" stroke-dasharray="1.5 2 2.5 1.5" opacity="0.80"/><line x1="444.8" y1="44" x2="459.8" y2="27" stroke="#dcdcdc" stroke-width="1" stroke-dasharray="2 3" opacity="1.00"/><path d="M431.3 46.0 h3 M432.8 44.5 v3" stroke="#a8a8a8" stroke-width="0.7" opacity="1.00"/><path d="M435.3 32.0 h3 M436.8 30.5 v3" stroke="#a8a8a8" stroke-width="0.7" opacity="1.00"/><polygon points="470.0,50 483.0,50 505.0,25 492.0,25" fill="url(#st)" opacity="1.00"/><line x1="491.0" y1="50" x2="513.0" y2="25" stroke="#a2a2a2" stroke-width="1.1" stroke-dasharray="2 1.5 1 2.5" opacity="1.00"/><line x1="467.0" y1="46" x2="485.0" y2="25" stroke="#adadad" stroke-width="0.9" stroke-dasharray="1.5 2 2.5 1.5" opacity="0.80"/><line x1="502.0" y1="44" x2="517.0" y2="27" stroke="#dcdcdc" stroke-width="1" stroke-dasharray="2 3" opacity="1.00"/><path d="M488.5 46.0 h3 M490.0 44.5 v3" stroke="#a8a8a8" stroke-width="0.7" opacity="1.00"/><path d="M492.5 32.0 h3 M494.0 30.5 v3" stroke="#a8a8a8" stroke-width="0.7" opacity="1.00"/><polygon points="527.2,50 540.2,50 562.2,25 549.2,25" fill="url(#st)" opacity="1.00"/><line x1="548.2" y1="50" x2="570.2" y2="25" stroke="#a2a2a2" stroke-width="1.1" stroke-dasharray="2 1.5 1 2.5" opacity="1.00"/><line x1="524.2" y1="46" x2="542.2" y2="25" stroke="#adadad" stroke-width="0.9" stroke-dasharray="1.5 2 2.5 1.5" opacity="0.80"/><line x1="559.2" y1="44" x2="574.2" y2="27" stroke="#dcdcdc" stroke-width="1" stroke-dasharray="2 3" opacity="1.00"/><path d="M545.7 46.0 h3 M547.2 44.5 v3" stroke="#a8a8a8" stroke-width="0.7" opacity="1.00"/><path d="M549.7 32.0 h3 M551.2 30.5 v3" stroke="#a8a8a8" stroke-width="0.7" opacity="1.00"/><polygon points="584.4,50 597.4,50 619.4,25 606.4,25" fill="url(#st)" opacity="1.00"/><line x1="605.4" y1="50" x2="627.4" y2="25" stroke="#a2a2a2" stroke-width="1.1" stroke-dasharray="2 1.5 1 2.5" opacity="1.00"/><line x1="581.4" y1="46" x2="599.4" y2="25" stroke="#adadad" stroke-width="0.9" stroke-dasharray="1.5 2 2.5 1.5" opacity="0.80"/><line x1="616.4" y1="44" x2="631.4" y2="27" stroke="#dcdcdc" stroke-width="1" stroke-dasharray="2 3" opacity="1.00"/><path d="M602.9 46.0 h3 M604.4 44.5 v3" stroke="#a8a8a8" stroke-width="0.7" opacity="1.00"/><path d="M606.9 32.0 h3 M608.4 30.5 v3" stroke="#a8a8a8" stroke-width="0.7" opacity="1.00"/></svg>
<div class="a" style="left:33.5px;top:25px;width:1px;height:25px;background:#e6e6e6"></div>
<div class="a" style="left:73.0px;top:25px;width:1px;height:25px;background:#a8a8a8"></div>
<div class="a" style="left:74.0px;top:25px;width:1px;height:25px;background:#e8e8e8"></div>
<div class="a" style="left:109.4px;top:25px;width:1px;height:25px;background:#a8a8a8"></div>
<div class="a" style="left:110.4px;top:25px;width:1px;height:25px;background:#e8e8e8"></div>
<div class="a" style="left:143.6px;top:25px;width:1px;height:25px;background:#a8a8a8"></div>
<div class="a" style="left:144.6px;top:25px;width:1px;height:25px;background:#e8e8e8"></div>
<svg class="a" style="left:44px;top:25px" width="20" height="16" viewBox="44 25 20 16"><path d="M50.6 34 C52.2 31.6 54 30 56 30.3 C58.6 30.8 58.4 34.4 55 37.6" fill="none" stroke="#1a66d8" stroke-width="1.7" stroke-linecap="round"/><path d="M49 30.1 L50.9 30.1 L50.9 33.2 L54 33.2 L54 35.1 L49 35.1Z" fill="#1a66d8"/></svg>
<svg class="a" style="left:82px;top:25px" width="18" height="17" viewBox="82 25 18 17"><ellipse cx="91.8" cy="37" rx="4.6" ry="2.7" fill="none" stroke="#1e1e1e" stroke-width="1.3" stroke-dasharray="1.1 0.9"/><ellipse cx="91.8" cy="36.9" rx="4.1" ry="2.3" fill="#e6e23a" stroke="#3a3a10" stroke-width="0.4"/><circle cx="89.6" cy="37.6" r="0.7" fill="#fafa90"/><circle cx="94" cy="37.6" r="0.7" fill="#fafa90"/><rect x="90.1" y="32.7" width="2.8" height="4.4" fill="#1446e0"/><rect x="90.1" y="32.7" width="2.8" height="0.8" fill="#30c0d0"/><path d="M90.6 32.8 L89.3 30.6 M92.4 32.8 L94.3 30.3" stroke="#333a55" stroke-width="0.9"/></svg>
<svg class="a" style="left:115px;top:24px" width="22" height="18" viewBox="115 24 22 18"><rect x="119" y="26.5" width="7.5" height="11" rx="1.6" fill="#ece37c"/><rect x="119.6" y="27.5" width="1.6" height="9" fill="#f6f0b0"/><rect x="123.4" y="30" width="9.4" height="6.2" fill="#f4f4f0"/><rect x="124.4" y="32.2" width="7.6" height="3.4" fill="#5b7fe0"/><path d="M132.6 29.8 L133.8 31 L133.4 36.4" stroke="#222" stroke-width="0.9" fill="none"/><circle cx="123.2" cy="37.6" r="2.8" fill="#f01010"/><rect x="122.8" y="35.8" width="0.8" height="2.6" fill="#fff"/></svg>
<div class="t" style="left:46.3px;top:42.6px;font-size:6px;color:#2a2a2a">Zavřít</div>
<div class="t" style="left:78px;top:42.6px;font-size:6px;color:#2a2a2a">Nastavení</div>
<div class="t" style="left:118px;top:42.6px;font-size:6px;color:#2a2a2a">Chyby</div>
<div class="a" style="left:564px;top:25px;width:63px;height:25px;background:#004f9c"></div>
<div class="t" style="left:574px;top:29px;font-size:6.4px;font-weight:bold;color:#c3d52b">BMT.</div>
<div class="t" style="left:574px;top:34.9px;font-size:6.4px;font-weight:bold;color:#fff">Protecting</div>
<div class="t" style="left:574px;top:41.8px;font-size:6.4px;font-weight:bold;color:#fff">human health.</div>
<div class="tab" style="left:33.5px;top:51.5px;width:37.5px;height:12.0px"></div>
<div class="led" style="left:36.0px;top:53.6px"></div>
<div class="t" style="left:46.0px;top:56.3px;font-size:4.95px;color:#222">Myčka č.1</div>
<div class="tab" style="left:72.8px;top:51.5px;width:38.2px;height:12.0px"></div>
<div class="led" style="left:75.3px;top:53.6px"></div>
<div class="t" style="left:85.3px;top:56.3px;font-size:4.95px;color:#222">Myčka č.2</div>
<div class="tab" style="left:112.7px;top:51.0px;width:46.3px;height:13.0px"></div>
<div class="led" style="left:115.2px;top:54.3px"></div>
<div class="t" style="left:125.2px;top:57.2px;font-size:4.95px;color:#222">Sterilizátor č.1</div>
<div class="tab" style="left:161.0px;top:51.5px;width:46.0px;height:12.0px"></div>
<div class="led" style="left:163.5px;top:53.6px"></div>
<div class="t" style="left:173.5px;top:56.3px;font-size:4.95px;color:#222">Sterilizátor č.2</div>
<div class="tab" style="left:209.0px;top:51.5px;width:76.5px;height:12.0px"></div>
<div class="led" style="left:211.5px;top:53.6px"></div>
<div class="t" style="left:221.5px;top:56.3px;font-size:4.95px;color:#222">Formaldehydový sterilizátor</div>
<div class="tab" style="left:287.5px;top:51.5px;width:61.5px;height:12.0px"></div>
<div class="led" style="left:290.0px;top:53.6px"></div>
<div class="t" style="left:300.0px;top:56.3px;font-size:4.95px;color:#222">Plazmový sterilizátor</div>
<div class="a" style="left:34px;top:67px;width:592px;height:37px;border:1px solid;border-color:#c4c4c4 #fafafa #fafafa #c4c4c4"></div>
<div class="t" style="left:38.9px;top:72.1px;font-size:4.9px;color:#333">Výrobce:</div>
<div class="t" style="left:63.8px;top:72.1px;font-size:4.95px;font-weight:bold;color:#111">BMT (SPHP/UNHP) TCP/IP CZ</div>
<div class="t" style="left:38.9px;top:79.9px;font-size:4.9px;color:#333">Přístroj:</div>
<div class="t" style="left:63.8px;top:79.9px;font-size:4.95px;font-weight:bold;color:#111">Sterilizátor č.1</div>
<div class="t" style="left:63.8px;top:87.6px;font-size:4.95px;font-weight:bold;color:#111">Sterivap HP 669-2ED</div>
<div class="t" style="left:38.9px;top:96.0px;font-size:4.9px;color:#333">Výr. číslo:</div>
<div class="t" style="left:63.8px;top:96.0px;font-size:4.95px;font-weight:bold;color:#111">A5241132</div>
<svg class="a" style="left:38px;top:84px" width="10" height="9" viewBox="0 0 10 9"><path d="M1.5 0.6 L4 3" stroke="#333" stroke-width="1"/><path d="M1 3.4 L6 3 L9 4 L9 7.5 L1 7.8Z" fill="#3a3a3a"/><path d="M5.5 3.6 L8.4 4.4 L8.4 6.8 L5.5 6.8Z" fill="#8a8a8a"/><rect x="2.2" y="4.2" width="2.6" height="1.6" fill="#bdbdbd"/><circle cx="2" cy="6.8" r="0.5" fill="#d03030"/><circle cx="3.2" cy="6.8" r="0.5" fill="#30a040"/></svg>
<div class="a" style="left:34px;top:104px;width:209.5px;height:308px;border:1px solid;border-color:#c4c4c4 #fafafa #fafafa #c4c4c4"></div>
<div class="gb" style="left:37.3px;top:111px;width:53.5px;height:57px"></div>
<div class="gl" style="left:41.5px;top:110px">Výběr dle</div>
<div class="rd on" style="left:41.2px;top:118.1px"></div>
<div class="t f5" style="left:49px;top:119.3px">Data</div>
<div class="rd" style="left:41.2px;top:128.1px"></div>
<div class="t f5" style="left:49px;top:129.3px">Programu</div>
<div class="rd" style="left:41.2px;top:137.9px"></div>
<div class="t f5" style="left:49px;top:139.1px">Data a programu</div>
<div class="rd" style="left:41.2px;top:147.9px"></div>
<div class="t f5" style="left:49px;top:149.1px">Poslední</div>
<div class="rd" style="left:41.2px;top:157.9px"></div>
<div class="t f5" style="left:49px;top:159.1px">Posledních</div>
<div class="a" style="left:75px;top:155.5px;width:8.5px;height:9.5px;background:#fff;border:0.9px solid;border-color:#8a8a8a #e8e8e8 #e8e8e8 #8a8a8a"></div>
<div class="t" style="left:76.8px;top:158.6px;font-size:4.9px;color:#a0a0a0">5</div>
<div class="a" style="left:83.6px;top:155.5px;width:7px;height:9.5px;background:#f0f0f0;border:0.8px solid;border-color:#fff #6a6a6a #6a6a6a #fff"></div>
<div class="a" style="left:83.8px;top:160px;width:6.6px;height:0.7px;background:#9a9a9a"></div>
<svg class="a" style="left:85.5px;top:156.8px" width="3" height="7" viewBox="0 0 3 7"><path d="M0.4 1.8 L2.6 1.8 L1.5 0.6Z M0.4 5.2 L2.6 5.2 L1.5 6.4Z" fill="#555"/></svg>
<div class="gb" style="left:93.7px;top:111px;width:111.3px;height:20px"></div>
<div class="gl" style="left:96.5px;top:110px">Program</div>
<div class="a" style="left:97px;top:118.6px;width:104.6px;height:8.2px;background:#fff;border:1px solid #c0c0c0"></div>
<div class="t" style="left:98.3px;top:120.6px;font-size:5.3px;color:#a0a0a0">P01 Nahřátí</div>
<div class="a" style="left:193.6px;top:119.6px;width:7px;height:6.2px;background:#f2f2f2;border:1px solid #d0d0d0"></div>
<svg class="a" style="left:195.3px;top:121.8px" width="4" height="3" viewBox="0 0 4 3"><path d="M0.5 0.5 L3.5 0.5 L2 2.2Z" fill="#999"/></svg>
<div class="a" style="left:206.6px;top:110.2px;width:17.4px;height:10.8px;background:#f0f0f0;border:1px solid;border-color:#fff #a0a0a0 #a0a0a0 #fff"></div>
<div class="a" style="left:206.6px;top:122.0px;width:17.4px;height:11.6px;background:#f0f0f0;border:1px solid;border-color:#fff #a0a0a0 #a0a0a0 #fff"></div>
<svg class="a" style="left:211px;top:111.8px" width="9" height="7" viewBox="0 0 9 7"><circle cx="2.2" cy="4.6" r="2" fill="#222"/><circle cx="6.8" cy="4.6" r="2" fill="#222"/><rect x="1.2" y="0.6" width="2" height="3" fill="#222"/><rect x="5.8" y="0.6" width="2" height="3" fill="#222"/><rect x="3" y="2.5" width="3" height="1.5" fill="#222"/></svg>
<svg class="a" style="left:210.5px;top:124px" width="9" height="8" viewBox="0 0 9 8"><rect x="2" y="0.3" width="5" height="2.5" fill="#fff" stroke="#444" stroke-width="0.6"/><rect x="0.5" y="2.7" width="8" height="3.6" fill="#555"/><rect x="2" y="5.2" width="5" height="2.3" fill="#eee" stroke="#444" stroke-width="0.6"/></svg>
<div class="gb" style="left:93.7px;top:138.6px;width:38.6px;height:27.8px"></div>
<div class="gl" style="left:96px;top:137.6px">Status</div>
<div class="rd on" style="left:97.3px;top:143.0px"></div>
<div class="t f5" style="left:105px;top:144.6px">Vše</div>
<div class="rd" style="left:97.3px;top:151.4px"></div>
<div class="t f5" style="left:105px;top:153.0px">Splněno</div>
<div class="rd" style="left:97.3px;top:159.3px"></div>
<div class="t f5" style="left:105px;top:160.9px">Nesplněno</div>
<div class="gb" style="left:135.3px;top:138.6px;width:70.4px;height:29.4px"></div>
<div class="gl" style="left:138px;top:137.6px">Datum</div>
<div class="t f5" style="left:146px;top:147.0px">od:</div>
<div class="a" style="left:153.5px;top:143.8px;width:31.4px;height:8px;background:#fff;border:0.9px solid;border-color:#8a8a8a #e0e0e0 #e0e0e0 #8a8a8a"></div>
<div class="t" style="left:155.6px;top:146.9px;font-size:4.8px;color:#222">25.02.2025</div>
<div class="a" style="left:185.8px;top:143.8px;width:8px;height:8px;background:#fdfdfd;border:0.9px solid;border-color:#b0b0b0 #777 #777 #b0b0b0"></div>
<svg class="a" style="left:187.8px;top:146.8px" width="4" height="3" viewBox="0 0 4 3"><path d="M0.3 0.5 L3.7 0.5 L2 2.4Z" fill="#111"/></svg>
<div class="t f5" style="left:146px;top:158.3px">do:</div>
<div class="a" style="left:153.5px;top:155.1px;width:31.4px;height:8px;background:#fff;border:0.9px solid;border-color:#8a8a8a #e0e0e0 #e0e0e0 #8a8a8a"></div>
<div class="t" style="left:155.6px;top:158.2px;font-size:4.8px;color:#222">28.02.2025</div>
<div class="a" style="left:185.8px;top:155.1px;width:8px;height:8px;background:#fdfdfd;border:0.9px solid;border-color:#b0b0b0 #777 #777 #b0b0b0"></div>
<svg class="a" style="left:187.8px;top:158.1px" width="4" height="3" viewBox="0 0 4 3"><path d="M0.3 0.5 L3.7 0.5 L2 2.4Z" fill="#111"/></svg>
<svg class="a" style="left:138.5px;top:147.3px" width="5" height="9" viewBox="0 0 5 9"><path d="M3.8 2 C1.2 2 0.9 6.4 3.6 7.6" fill="none" stroke="#129a12" stroke-width="1.5"/><path d="M2.2 0.3 L4.8 2 L2.2 3.7Z" fill="#129a12"/></svg>
<svg class="a" style="left:197.2px;top:147.3px" width="5" height="9" viewBox="0 0 5 9"><path d="M1.2 1.4 C3.8 2.6 4.1 6.9 1.4 7" fill="none" stroke="#129a12" stroke-width="1.5"/><path d="M2.8 5.3 L0.2 7 L2.8 8.7Z" fill="#0e6a3a"/></svg>
<div class="t f5" style="left:38.5px;top:173.5px">Počet záznamů: 7</div>
<div class="a" style="left:34.5px;top:180.3px;width:208px;height:228.7px;background:#fff;border-left:1.5px solid #8a8a8a;border-top:1px solid #8a8a8a"></div>
<div class="a" style="left:235.7px;top:181px;width:6.5px;height:228px;background:#f0f0f0"></div>
<div class="a" style="left:238px;top:221px;width:1px;height:187px;background:#9a9a9a"></div>
<div class="a" style="left:227px;top:181px;width:9px;height:8px;background:#f0f0f0"></div>
<div class="a" style="left:36px;top:181px;width:191px;height:8px;background:#f0f0f0"></div>
<div class="a" style="left:36px;top:188.3px;width:191px;height:0.9px;background:#8a8a8a"></div>
<div class="t" style="left:42.5px;top:184.2px;font-size:4.95px;font-weight:bold;color:#111">Šarže</div>
<div class="t" style="left:59.0px;top:184.2px;font-size:4.95px;font-weight:bold;color:#111">Program</div>
<div class="t" style="left:126.0px;top:184.2px;font-size:4.95px;font-weight:bold;color:#111">Datum</div>
<div class="t" style="left:156.9px;top:184.2px;font-size:4.95px;font-weight:bold;color:#111">Čas startu</div>
<div class="t" style="left:187.0px;top:184.2px;font-size:4.95px;font-weight:bold;color:#111">Čas konce</div>
<div class="t" style="left:41.5px;top:191.50px;width:14.5px;text-align:right;font-size:5.25px;letter-spacing:-0.18px;color:#1a1a1a">251</div>
<div class="t" style="left:58.5px;top:191.50px;font-size:5.25px;letter-spacing:-0.18px;color:#1a1a1a">P06 Test vakua</div>
<div class="t" style="left:125.5px;top:191.50px;font-size:5.25px;letter-spacing:-0.18px;color:#1a1a1a">28.02.2025</div>
<div class="t" style="left:156.4px;top:191.50px;font-size:5.25px;letter-spacing:-0.18px;color:#1a1a1a">06:00:02</div>
<div class="t" style="left:186.5px;top:191.50px;font-size:5.25px;letter-spacing:-0.18px;color:#1a1a1a">06:19:17</div>
<svg class="a" style="left:218.8px;top:190.60px" width="6" height="6" viewBox="0 0 6 6"><path d="M0.8 3.4 L2.3 5.1 L5.3 0.9" fill="none" stroke="#e01010" stroke-width="1"/></svg>
<div class="a" style="left:41px;top:197.04px;width:186px;height:0.6px;background:#e3e3e3"></div>
<div class="t" style="left:41.5px;top:200.14px;width:14.5px;text-align:right;font-size:5.25px;letter-spacing:-0.18px;color:#1a1a1a">252</div>
<div class="t" style="left:58.5px;top:200.14px;font-size:5.25px;letter-spacing:-0.18px;color:#1a1a1a">P01 Nahřátí</div>
<div class="t" style="left:125.5px;top:200.14px;font-size:5.25px;letter-spacing:-0.18px;color:#1a1a1a">28.02.2025</div>
<div class="t" style="left:156.4px;top:200.14px;font-size:5.25px;letter-spacing:-0.18px;color:#1a1a1a">06:19:49</div>
<div class="t" style="left:186.5px;top:200.14px;font-size:5.25px;letter-spacing:-0.18px;color:#1a1a1a">06:35:05</div>
<svg class="a" style="left:218.8px;top:199.24px" width="6" height="6" viewBox="0 0 6 6"><path d="M0.8 3.4 L2.3 5.1 L5.3 0.9" fill="none" stroke="#e01010" stroke-width="1"/></svg>
<div class="a" style="left:41px;top:205.68px;width:186px;height:0.6px;background:#e3e3e3"></div>
<div class="a" style="left:41px;top:206.28px;width:186px;height:8.64px;background:#0a78d7"></div>
<div class="t" style="left:41.5px;top:208.78px;width:14.5px;text-align:right;font-size:5.25px;letter-spacing:-0.18px;color:#fff">253</div>
<div class="t" style="left:58.5px;top:208.78px;font-size:5.25px;letter-spacing:-0.18px;color:#fff">P05 Bowie+Dick test</div>
<div class="t" style="left:125.5px;top:208.78px;font-size:5.25px;letter-spacing:-0.18px;color:#fff">28.02.2025</div>
<div class="t" style="left:156.4px;top:208.78px;font-size:5.25px;letter-spacing:-0.18px;color:#fff">06:57:18</div>
<div class="t" style="left:186.5px;top:208.78px;font-size:5.25px;letter-spacing:-0.18px;color:#fff">07:30:32</div>
<svg class="a" style="left:218.8px;top:207.88px" width="6" height="6" viewBox="0 0 6 6"><path d="M0.8 3.4 L2.3 5.1 L5.3 0.9" fill="none" stroke="#fff" stroke-width="1"/></svg>
<div class="a" style="left:41px;top:214.32px;width:186px;height:0.6px;background:#e3e3e3"></div>
<div class="t" style="left:41.5px;top:217.42px;width:14.5px;text-align:right;font-size:5.25px;letter-spacing:-0.18px;color:#1a1a1a">254</div>
<div class="t" style="left:58.5px;top:217.42px;font-size:5.25px;letter-spacing:-0.18px;color:#1a1a1a">P03 Univerzál kontejnery</div>
<div class="t" style="left:125.5px;top:217.42px;font-size:5.25px;letter-spacing:-0.18px;color:#1a1a1a">28.02.2025</div>
<div class="t" style="left:156.4px;top:217.42px;font-size:5.25px;letter-spacing:-0.18px;color:#1a1a1a">07:36:59</div>
<div class="t" style="left:186.5px;top:217.42px;font-size:5.25px;letter-spacing:-0.18px;color:#1a1a1a">08:41:02</div>
<svg class="a" style="left:218.8px;top:216.52px" width="6" height="6" viewBox="0 0 6 6"><path d="M0.8 3.4 L2.3 5.1 L5.3 0.9" fill="none" stroke="#e01010" stroke-width="1"/></svg>
<div class="a" style="left:41px;top:222.96px;width:186px;height:0.6px;background:#e3e3e3"></div>
<div class="t" style="left:41.5px;top:226.06px;width:14.5px;text-align:right;font-size:5.25px;letter-spacing:-0.18px;color:#1a1a1a">255</div>
<div class="t" style="left:58.5px;top:226.06px;font-size:5.25px;letter-spacing:-0.18px;color:#1a1a1a">P03 Univerzál kontejnery</div>
<div class="t" style="left:125.5px;top:226.06px;font-size:5.25px;letter-spacing:-0.18px;color:#1a1a1a">28.02.2025</div>
<div class="t" style="left:156.4px;top:226.06px;font-size:5.25px;letter-spacing:-0.18px;color:#1a1a1a">11:52:57</div>
<div class="t" style="left:186.5px;top:226.06px;font-size:5.25px;letter-spacing:-0.18px;color:#1a1a1a">12:58:26</div>
<svg class="a" style="left:218.8px;top:225.16px" width="6" height="6" viewBox="0 0 6 6"><path d="M0.8 3.4 L2.3 5.1 L5.3 0.9" fill="none" stroke="#e01010" stroke-width="1"/></svg>
<div class="a" style="left:41px;top:231.60px;width:186px;height:0.6px;background:#e3e3e3"></div>
<div class="t" style="left:41.5px;top:234.70px;width:14.5px;text-align:right;font-size:5.25px;letter-spacing:-0.18px;color:#1a1a1a">256</div>
<div class="t" style="left:58.5px;top:234.70px;font-size:5.25px;letter-spacing:-0.18px;color:#1a1a1a">P03 Univerzál kontejnery</div>
<div class="t" style="left:125.5px;top:234.70px;font-size:5.25px;letter-spacing:-0.18px;color:#1a1a1a">28.02.2025</div>
<div class="t" style="left:156.4px;top:234.70px;font-size:5.25px;letter-spacing:-0.18px;color:#1a1a1a">13:36:11</div>
<div class="t" style="left:186.5px;top:234.70px;font-size:5.25px;letter-spacing:-0.18px;color:#1a1a1a">14:45:41</div>
<svg class="a" style="left:218.8px;top:233.80px" width="6" height="6" viewBox="0 0 6 6"><path d="M0.8 3.4 L2.3 5.1 L5.3 0.9" fill="none" stroke="#e01010" stroke-width="1"/></svg>
<div class="a" style="left:41px;top:240.24px;width:186px;height:0.6px;background:#e3e3e3"></div>
<div class="t" style="left:41.5px;top:243.34px;width:14.5px;text-align:right;font-size:5.25px;letter-spacing:-0.18px;color:#1a1a1a">257</div>
<div class="t" style="left:58.5px;top:243.34px;font-size:5.25px;letter-spacing:-0.18px;color:#1a1a1a">P03 Univerzál kontejnery</div>
<div class="t" style="left:125.5px;top:243.34px;font-size:5.25px;letter-spacing:-0.18px;color:#1a1a1a">28.02.2025</div>
<div class="t" style="left:156.4px;top:243.34px;font-size:5.25px;letter-spacing:-0.18px;color:#1a1a1a">16:11:22</div>
<div class="t" style="left:186.5px;top:243.34px;font-size:5.25px;letter-spacing:-0.18px;color:#1a1a1a">17:08:42</div>
<svg class="a" style="left:218.8px;top:242.44px" width="6" height="6" viewBox="0 0 6 6"><path d="M0.8 3.4 L2.3 5.1 L5.3 0.9" fill="none" stroke="#e01010" stroke-width="1"/></svg>
<div class="a" style="left:41px;top:248.88px;width:186px;height:0.6px;background:#e3e3e3"></div>
<div class="a" style="left:36px;top:189px;width:5px;height:60.5px;background:#f0f0f0"></div>
<div class="a" style="left:36px;top:188.70px;width:5px;height:0.6px;background:#8a8a8a"></div>
<div class="a" style="left:36px;top:197.34px;width:5px;height:0.6px;background:#8a8a8a"></div>
<div class="a" style="left:36px;top:205.98px;width:5px;height:0.6px;background:#8a8a8a"></div>
<div class="a" style="left:36px;top:214.62px;width:5px;height:0.6px;background:#8a8a8a"></div>
<div class="a" style="left:36px;top:223.26px;width:5px;height:0.6px;background:#8a8a8a"></div>
<div class="a" style="left:36px;top:231.90px;width:5px;height:0.6px;background:#8a8a8a"></div>
<div class="a" style="left:36px;top:240.54px;width:5px;height:0.6px;background:#8a8a8a"></div>
<div class="a" style="left:36px;top:249.18px;width:5px;height:0.6px;background:#8a8a8a"></div>
<svg class="a" style="left:36.8px;top:208.08px" width="3" height="5" viewBox="0 0 3 5"><path d="M0 0 L2.6 2.5 L0 5Z" fill="#000"/></svg>
<div class="a" style="left:40.6px;top:189px;width:0.8px;height:60.5px;background:#d0d0d0"></div>
<div class="a" style="left:40.4px;top:181px;width:1px;height:8px;background:#7a7a7a"></div>
<div class="a" style="left:41.4px;top:181.5px;width:0.7px;height:7px;background:#fff"></div>
<div class="a" style="left:57.1px;top:189px;width:0.8px;height:60.5px;background:#d0d0d0"></div>
<div class="a" style="left:56.9px;top:181px;width:1px;height:8px;background:#7a7a7a"></div>
<div class="a" style="left:57.9px;top:181.5px;width:0.7px;height:7px;background:#fff"></div>
<div class="a" style="left:124.1px;top:189px;width:0.8px;height:60.5px;background:#d0d0d0"></div>
<div class="a" style="left:123.9px;top:181px;width:1px;height:8px;background:#7a7a7a"></div>
<div class="a" style="left:124.9px;top:181.5px;width:0.7px;height:7px;background:#fff"></div>
<div class="a" style="left:155.0px;top:189px;width:0.8px;height:60.5px;background:#d0d0d0"></div>
<div class="a" style="left:154.8px;top:181px;width:1px;height:8px;background:#7a7a7a"></div>
<div class="a" style="left:155.8px;top:181.5px;width:0.7px;height:7px;background:#fff"></div>
<div class="a" style="left:185.1px;top:189px;width:0.8px;height:60.5px;background:#d0d0d0"></div>
<div class="a" style="left:184.9px;top:181px;width:1px;height:8px;background:#7a7a7a"></div>
<div class="a" style="left:185.9px;top:181.5px;width:0.7px;height:7px;background:#fff"></div>
<div class="a" style="left:215.1px;top:189px;width:0.8px;height:60.5px;background:#d0d0d0"></div>
<div class="a" style="left:214.9px;top:181px;width:1px;height:8px;background:#7a7a7a"></div>
<div class="a" style="left:215.9px;top:181.5px;width:0.7px;height:7px;background:#fff"></div>
<div class="a" style="left:226.3px;top:189px;width:0.8px;height:60.5px;background:#d0d0d0"></div>
<div class="a" style="left:226.1px;top:181px;width:1px;height:8px;background:#7a7a7a"></div>
<div class="a" style="left:227.1px;top:181.5px;width:0.7px;height:7px;background:#fff"></div>
<div class="a" style="left:40.6px;top:181px;width:0.8px;height:68.5px;background:#8a8a8a"></div>
<div class="a" style="left:226.3px;top:181px;width:0.8px;height:68.5px;background:#9a9a9a"></div>
<div class="a" style="left:245px;top:104px;width:381px;height:308px;border:1px solid;border-color:#c4c4c4 #fafafa #fafafa #c4c4c4"></div>
<div class="t" style="left:247.9px;top:108.9px;font-size:4.9px;color:#333">Program</div>
<div class="t" style="left:275.6px;top:108.9px;font-size:5.15px;font-weight:bold;color:#111">P05 Bowie+Dick test</div>
<div class="t" style="left:247.9px;top:118.1px;font-size:4.9px;color:#333">Datum:</div>
<div class="t" style="left:275.6px;top:117.6px;font-size:5.86px;font-weight:bold;color:#111">28.02.2025</div>
<div class="t" style="left:247.9px;top:127.3px;font-size:4.9px;color:#333">Čas startu:</div>
<div class="t" style="left:275.6px;top:126.8px;font-size:5.86px;font-weight:bold;color:#111">06:57:18</div>
<div class="t" style="left:247.9px;top:136.2px;font-size:4.9px;color:#333">Čas konce:</div>
<div class="t" style="left:275.6px;top:135.7px;font-size:5.86px;font-weight:bold;color:#111">07:30:32</div>
<div class="t" style="left:247.9px;top:145.3px;font-size:4.9px;color:#333">Šarže:</div>
<div class="t" style="left:275.6px;top:144.8px;font-size:5.86px;font-weight:bold;color:#111">253</div>
<div class="a" style="left:247.5px;top:154.5px;width:164px;height:244.3px;background:#fff;border-left:1.2px solid #9a9a9a;border-top:1.2px solid #9a9a9a"></div>
<div class="a" style="left:403.3px;top:155.5px;width:8px;height:243.3px;background:#f0f0f0"></div>
<div class="a" style="left:406.4px;top:162.6px;width:1.2px;height:164.5px;background:#a8a8a8"></div>
<div class="tl" style="top:157.00px">STERIVAP HP 669 2ED A5241132</div>
<div class="tl" style="top:163.42px">Linux BMTDIST Version 2.4</div>
<div class="tl" style="top:169.84px">Typ programu Ster</div>
<div class="tl" style="top:176.26px">P05 Bowie+Dick test</div>
<div class="tl" style="top:182.68px">134.0°C(PT1.1), 3.5min</div>
<div class="tl" style="top:189.10px">Uživatel1: Open User</div>
<div class="tl" style="top:195.52px">Uživatel2: openuser</div>
<div class="tl" style="top:201.94px">Detektor vzduchu Zap</div>
<div class="tl" style="top:208.36px">Start</div>
<div class="tl" style="top:214.78px">&nbsp;T(PT1.2)=63.4°C; p=97.4kPa&nbsp; 06:57:18 2025-02-28</div>
<div class="tl" style="top:221.20px">Jednotky tlaku: kPa Absolutní</div>
<div class="tl" style="top:227.62px">Šarže 00253</div>
<div class="tl" style="top:234.04px">Poslední vakuum test: 2025-02-28</div>
<div class="tl" style="top:240.46px">Poslední B&amp;D test: 2025-02-27</div>
<div class="tl" style="top:246.88px">Evakuace (1)</div>
<div class="tl" style="top:253.30px">&nbsp;T(PT1.2)=63.4°C; p=98.0kPa&nbsp; 06:57:38 2025-02-28</div>
<div class="tl" style="top:259.72px">&nbsp;T(PT1.2)=100.9°C; p=7.6kPa&nbsp; 07:00:03 2025-02-28</div>
<div class="tl" style="top:266.14px">Evakuace (2)</div>
<div class="tl" style="top:272.56px">&nbsp;T(PT1.2)=106.5°C; p=137.6kPa&nbsp; 07:01:33 2025-02-28</div>
<div class="tl" style="top:278.98px">&nbsp;T(PT1.2)=98.9°C; p=9.6kPa&nbsp; 07:03:05 2025-02-28</div>
<div class="tl" style="top:285.40px">Evakuace (3)</div>
<div class="tl" style="top:291.82px">&nbsp;T(PT1.2)=100.1°C; p=95.1kPa&nbsp; 07:04:07 2025-02-28</div>
<div class="tl" style="top:298.24px">&nbsp;T(PT1.2)=98.3°C; p=9.9kPa&nbsp; 07:05:01 2025-02-28</div>
<div class="tl" style="top:304.66px">Evakuace (4)</div>
<div class="tl" style="top:311.08px">&nbsp;T(PT1.2)=104.0°C; p=98.4kPa&nbsp; 07:06:08 2025-02-28</div>
<div class="tl" style="top:317.50px">&nbsp;T(PT1.2)=99.2°C; p=14.6kPa&nbsp; 07:06:54 2025-02-28</div>
<div class="tl" style="top:323.92px">Propařování (1)</div>
<div class="tl" style="top:330.34px">&nbsp;T(PT1.2)=110.8°C; p=146.7kPa&nbsp; 07:09:58 2025-02-28</div>
<div class="tl" style="top:336.76px">Nahřívání</div>
<div class="tl" style="top:343.18px">&nbsp;T(PT1.2)=107.5°C; p=124.9kPa&nbsp; 07:10:10 2025-02-28</div>
<div class="tl" style="top:349.60px">Příprava</div>
<div class="tl" style="top:356.02px">&nbsp;T(PT1.2)=130.3°C; p=272.9kPa&nbsp; 07:12:36 2025-02-28</div>
<div class="tl" style="top:362.44px">Start sterilizace</div>
<div class="tl" style="top:368.86px">&nbsp;T(PT1.2)=134.4°C; p=310.8kPa&nbsp; 07:13:21 2025-02-28</div>
<div class="tl" style="top:375.28px">Konec sterilizace</div>
<div class="tl" style="top:381.70px">&nbsp;T(PT1.2)=135.5°C; p=313.0kPa&nbsp; 07:16:51 2025-02-28</div>
<div class="tl" style="top:388.12px">Sušení (1)</div>
<svg class="a" style="left:411px;top:154px" width="216" height="246" viewBox="411 154 216 246"><rect x="411" y="154" width="216" height="246" fill="#f0f0f0"/><rect x="413.3" y="155.2" width="211" height="243.6" fill="#fff"/><path d="M412.8 398.8 V154.8 H624.3" fill="none" stroke="#8c8c8c" stroke-width="1.2"/><path d="M625.2 153.5 V398.9 H412.5" fill="none" stroke="#8c8c8c" stroke-width="1"/><line x1="414.3" y1="156" x2="414.3" y2="369" stroke="#a0a0a0" stroke-width="0.6" stroke-dasharray="0.8 3"/><line x1="434.4" y1="156" x2="434.4" y2="369" stroke="#a0a0a0" stroke-width="0.6" stroke-dasharray="0.8 3"/><line x1="604.4" y1="156" x2="604.4" y2="369" stroke="#a0a0a0" stroke-width="0.6" stroke-dasharray="0.8 3"/><polyline points="494.2,155.5 500.0,156.9 510.0,158.2 513.6,159.1 509.0,160.0 506.4,161.3 505.1,168.2 504.0,177.3 504.5,191.8 502.7,198.2 498.2,202.7 493.6,206.4 492.7,208.5 493.6,210.5 480.0,212.7 461.8,216.4 445.5,220.9 434.2,224.5 433.3,226.4 433.3,249.5 437.3,252.3 438.5,255.0 439.1,258.3 449.1,264.1 467.6,271.4 460.9,273.7 463.6,274.6 476.4,276.8 493.6,281.9 498.2,284.5 502.7,288.6 518.2,291.9 470.0,299.9 520.9,305.0 522.7,305.9 524.5,307.4 470.9,315.9 524.5,323.2 471.8,332.6 473.6,333.5 498.2,335.9 502.7,342.3 508.2,355.9 510.0,364.1 513.6,369.2" fill="none" stroke="#383838" stroke-width="0.85" stroke-linejoin="round"/><polyline points="551.3,155.0 551.3,160.0 556.4,160.0 557.3,162.4 567.3,166.4 583.6,170.0 600.9,174.2 601.5,195.5 600.0,202.7 594.5,207.3 580.0,210.5 525.5,215.8 525.5,216.9 524.5,239.0 522.7,255.0 521.0,267.7 535.5,271.4 520.0,273.2 520.0,274.1 543.6,276.8 578.2,283.2 599.1,288.3 593.6,289.5 598.2,290.5 593.6,294.1 534.5,300.5 598.2,305.9 593.6,307.2 598.2,308.6 534.5,316.5 598.2,322.3 596.4,323.2 598.2,324.1 534.5,333.2 600.0,337.7 598.5,342.3 600.0,344.5 598.2,353.2 590.9,359.5 574.5,365.0 550.9,369.2" fill="none" stroke="#383838" stroke-width="0.85" stroke-linejoin="round"/><line x1="414.1" y1="370.3" x2="604.6" y2="370.3" stroke="#333" stroke-width="0.8"/><line x1="414.10" y1="370.3" x2="414.10" y2="373.60" stroke="#444" stroke-width="0.5"/><line x1="417.28" y1="370.3" x2="417.28" y2="372.50" stroke="#444" stroke-width="0.5"/><line x1="420.45" y1="370.3" x2="420.45" y2="372.50" stroke="#444" stroke-width="0.5"/><line x1="423.62" y1="370.3" x2="423.62" y2="372.50" stroke="#444" stroke-width="0.5"/><line x1="426.80" y1="370.3" x2="426.80" y2="373.60" stroke="#444" stroke-width="0.5"/><line x1="429.98" y1="370.3" x2="429.98" y2="372.50" stroke="#444" stroke-width="0.5"/><line x1="433.15" y1="370.3" x2="433.15" y2="372.50" stroke="#444" stroke-width="0.5"/><line x1="436.33" y1="370.3" x2="436.33" y2="372.50" stroke="#444" stroke-width="0.5"/><line x1="439.50" y1="370.3" x2="439.50" y2="373.60" stroke="#444" stroke-width="0.5"/><line x1="442.68" y1="370.3" x2="442.68" y2="372.50" stroke="#444" stroke-width="0.5"/><line x1="445.85" y1="370.3" x2="445.85" y2="372.50" stroke="#444" stroke-width="0.5"/><line x1="449.03" y1="370.3" x2="449.03" y2="372.50" stroke="#444" stroke-width="0.5"/><line x1="452.20" y1="370.3" x2="452.20" y2="373.60" stroke="#444" stroke-width="0.5"/><line x1="455.38" y1="370.3" x2="455.38" y2="372.50" stroke="#444" stroke-width="0.5"/><line x1="458.55" y1="370.3" x2="458.55" y2="372.50" stroke="#444" stroke-width="0.5"/><line x1="461.73" y1="370.3" x2="461.73" y2="372.50" stroke="#444" stroke-width="0.5"/><line x1="464.90" y1="370.3" x2="464.90" y2="373.60" stroke="#444" stroke-width="0.5"/><line x1="468.08" y1="370.3" x2="468.08" y2="372.50" stroke="#444" stroke-width="0.5"/><line x1="471.25" y1="370.3" x2="471.25" y2="372.50" stroke="#444" stroke-width="0.5"/><line x1="474.43" y1="370.3" x2="474.43" y2="372.50" stroke="#444" stroke-width="0.5"/><line x1="477.60" y1="370.3" x2="477.60" y2="373.60" stroke="#444" stroke-width="0.5"/><line x1="480.78" y1="370.3" x2="480.78" y2="372.50" stroke="#444" stroke-width="0.5"/><line x1="483.95" y1="370.3" x2="483.95" y2="372.50" stroke="#444" stroke-width="0.5"/><line x1="487.12" y1="370.3" x2="487.12" y2="372.50" stroke="#444" stroke-width="0.5"/><line x1="490.30" y1="370.3" x2="490.30" y2="373.60" stroke="#444" stroke-width="0.5"/><line x1="493.48" y1="370.3" x2="493.48" y2="372.50" stroke="#444" stroke-width="0.5"/><line x1="496.65" y1="370.3" x2="496.65" y2="372.50" stroke="#444" stroke-width="0.5"/><line x1="499.83" y1="370.3" x2="499.83" y2="372.50" stroke="#444" stroke-width="0.5"/><line x1="503.00" y1="370.3" x2="503.00" y2="373.60" stroke="#444" stroke-width="0.5"/><line x1="506.18" y1="370.3" x2="506.18" y2="372.50" stroke="#444" stroke-width="0.5"/><line x1="509.35" y1="370.3" x2="509.35" y2="372.50" stroke="#444" stroke-width="0.5"/><line x1="512.52" y1="370.3" x2="512.52" y2="372.50" stroke="#444" stroke-width="0.5"/><line x1="515.70" y1="370.3" x2="515.70" y2="373.60" stroke="#444" stroke-width="0.5"/><line x1="518.88" y1="370.3" x2="518.88" y2="372.50" stroke="#444" stroke-width="0.5"/><line x1="522.05" y1="370.3" x2="522.05" y2="372.50" stroke="#444" stroke-width="0.5"/><line x1="525.23" y1="370.3" x2="525.23" y2="372.50" stroke="#444" stroke-width="0.5"/><line x1="528.40" y1="370.3" x2="528.40" y2="373.60" stroke="#444" stroke-width="0.5"/><line x1="531.58" y1="370.3" x2="531.58" y2="372.50" stroke="#444" stroke-width="0.5"/><line x1="534.75" y1="370.3" x2="534.75" y2="372.50" stroke="#444" stroke-width="0.5"/><line x1="537.93" y1="370.3" x2="537.93" y2="372.50" stroke="#444" stroke-width="0.5"/><line x1="541.10" y1="370.3" x2="541.10" y2="373.60" stroke="#444" stroke-width="0.5"/><line x1="544.28" y1="370.3" x2="544.28" y2="372.50" stroke="#444" stroke-width="0.5"/><line x1="547.45" y1="370.3" x2="547.45" y2="372.50" stroke="#444" stroke-width="0.5"/><line x1="550.62" y1="370.3" x2="550.62" y2="372.50" stroke="#444" stroke-width="0.5"/><line x1="553.80" y1="370.3" x2="553.80" y2="373.60" stroke="#444" stroke-width="0.5"/><line x1="556.98" y1="370.3" x2="556.98" y2="372.50" stroke="#444" stroke-width="0.5"/><line x1="560.15" y1="370.3" x2="560.15" y2="372.50" stroke="#444" stroke-width="0.5"/><line x1="563.33" y1="370.3" x2="563.33" y2="372.50" stroke="#444" stroke-width="0.5"/><line x1="566.50" y1="370.3" x2="566.50" y2="373.60" stroke="#444" stroke-width="0.5"/><line x1="569.67" y1="370.3" x2="569.67" y2="372.50" stroke="#444" stroke-width="0.5"/><line x1="572.85" y1="370.3" x2="572.85" y2="372.50" stroke="#444" stroke-width="0.5"/><line x1="576.03" y1="370.3" x2="576.03" y2="372.50" stroke="#444" stroke-width="0.5"/><line x1="579.20" y1="370.3" x2="579.20" y2="373.60" stroke="#444" stroke-width="0.5"/><line x1="582.38" y1="370.3" x2="582.38" y2="372.50" stroke="#444" stroke-width="0.5"/><line x1="585.55" y1="370.3" x2="585.55" y2="372.50" stroke="#444" stroke-width="0.5"/><line x1="588.73" y1="370.3" x2="588.73" y2="372.50" stroke="#444" stroke-width="0.5"/><line x1="591.90" y1="370.3" x2="591.90" y2="373.60" stroke="#444" stroke-width="0.5"/><line x1="595.08" y1="370.3" x2="595.08" y2="372.50" stroke="#444" stroke-width="0.5"/><line x1="598.25" y1="370.3" x2="598.25" y2="372.50" stroke="#444" stroke-width="0.5"/><line x1="601.42" y1="370.3" x2="601.42" y2="372.50" stroke="#444" stroke-width="0.5"/><line x1="604.60" y1="370.3" x2="604.60" y2="373.60" stroke="#444" stroke-width="0.5"/><line x1="414.1" y1="382.4" x2="604.6" y2="382.4" stroke="#333" stroke-width="0.8"/><line x1="414.10" y1="382.4" x2="414.10" y2="385.70" stroke="#444" stroke-width="0.55"/><line x1="419.54" y1="382.4" x2="419.54" y2="384.60" stroke="#444" stroke-width="0.55"/><line x1="424.99" y1="382.4" x2="424.99" y2="384.60" stroke="#444" stroke-width="0.55"/><line x1="430.43" y1="382.4" x2="430.43" y2="384.60" stroke="#444" stroke-width="0.55"/><line x1="435.87" y1="382.4" x2="435.87" y2="384.60" stroke="#444" stroke-width="0.55"/><line x1="441.31" y1="382.4" x2="441.31" y2="385.70" stroke="#444" stroke-width="0.55"/><line x1="446.76" y1="382.4" x2="446.76" y2="384.60" stroke="#444" stroke-width="0.55"/><line x1="452.20" y1="382.4" x2="452.20" y2="384.60" stroke="#444" stroke-width="0.55"/><line x1="457.64" y1="382.4" x2="457.64" y2="384.60" stroke="#444" stroke-width="0.55"/><line x1="463.09" y1="382.4" x2="463.09" y2="384.60" stroke="#444" stroke-width="0.55"/><line x1="468.53" y1="382.4" x2="468.53" y2="385.70" stroke="#444" stroke-width="0.55"/><line x1="473.97" y1="382.4" x2="473.97" y2="384.60" stroke="#444" stroke-width="0.55"/><line x1="479.41" y1="382.4" x2="479.41" y2="384.60" stroke="#444" stroke-width="0.55"/><line x1="484.86" y1="382.4" x2="484.86" y2="384.60" stroke="#444" stroke-width="0.55"/><line x1="490.30" y1="382.4" x2="490.30" y2="384.60" stroke="#444" stroke-width="0.55"/><line x1="495.74" y1="382.4" x2="495.74" y2="385.70" stroke="#444" stroke-width="0.55"/><line x1="501.19" y1="382.4" x2="501.19" y2="384.60" stroke="#444" stroke-width="0.55"/><line x1="506.63" y1="382.4" x2="506.63" y2="384.60" stroke="#444" stroke-width="0.55"/><line x1="512.07" y1="382.4" x2="512.07" y2="384.60" stroke="#444" stroke-width="0.55"/><line x1="517.51" y1="382.4" x2="517.51" y2="384.60" stroke="#444" stroke-width="0.55"/><line x1="522.96" y1="382.4" x2="522.96" y2="385.70" stroke="#444" stroke-width="0.55"/><line x1="528.40" y1="382.4" x2="528.40" y2="384.60" stroke="#444" stroke-width="0.55"/><line x1="533.84" y1="382.4" x2="533.84" y2="384.60" stroke="#444" stroke-width="0.55"/><line x1="539.29" y1="382.4" x2="539.29" y2="384.60" stroke="#444" stroke-width="0.55"/><line x1="544.73" y1="382.4" x2="544.73" y2="384.60" stroke="#444" stroke-width="0.55"/><line x1="550.17" y1="382.4" x2="550.17" y2="385.70" stroke="#444" stroke-width="0.55"/><line x1="555.61" y1="382.4" x2="555.61" y2="384.60" stroke="#444" stroke-width="0.55"/><line x1="561.06" y1="382.4" x2="561.06" y2="384.60" stroke="#444" stroke-width="0.55"/><line x1="566.50" y1="382.4" x2="566.50" y2="384.60" stroke="#444" stroke-width="0.55"/><line x1="571.94" y1="382.4" x2="571.94" y2="384.60" stroke="#444" stroke-width="0.55"/><line x1="577.39" y1="382.4" x2="577.39" y2="385.70" stroke="#444" stroke-width="0.55"/><line x1="582.83" y1="382.4" x2="582.83" y2="384.60" stroke="#444" stroke-width="0.55"/><line x1="588.27" y1="382.4" x2="588.27" y2="384.60" stroke="#444" stroke-width="0.55"/><line x1="593.71" y1="382.4" x2="593.71" y2="384.60" stroke="#444" stroke-width="0.55"/><line x1="599.16" y1="382.4" x2="599.16" y2="384.60" stroke="#444" stroke-width="0.55"/><line x1="604.60" y1="382.4" x2="604.60" y2="385.70" stroke="#444" stroke-width="0.55"/><text x="414.4" y="380" font-family="Liberation Mono" font-size="5.9" fill="#333">150°C</text><text x="604.8" y="380" font-family="Liberation Mono" font-size="5.9" fill="#333" text-anchor="end">0°C</text><text x="414.4" y="392" font-family="Liberation Mono" font-size="5.9" fill="#333">350kPa</text><text x="604.8" y="392" font-family="Liberation Mono" font-size="5.9" fill="#333" text-anchor="end">0kPa</text></svg>
<div class="tab" style="left:246.0px;top:399.3px;width:19.6px;height:8.2px;border-top:none"></div>
<div class="t" style="left:248.8px;top:402.8px;font-size:4.9px;color:#222">Text</div>
<div class="tab" style="left:266.6px;top:399.3px;width:17.7px;height:8.2px;border-top:none"></div>
<div class="t" style="left:269.4px;top:402.8px;font-size:4.9px;color:#222">Graf</div>
<div class="tab" style="left:285.0px;top:398.6px;width:31.4px;height:10.3px;border-top:none"></div>
<div class="t" style="left:287.8px;top:403.9px;font-size:4.9px;color:#222">Text + Graf</div>
<div class="a" style="left:316.4px;top:398.8px;width:308px;height:0.8px;background:#b0b0b0"></div>
<div class="sb" style="left:33.4px;width:71.9px">Archiv - Verze 3.0.0.0</div>
<div class="sb" style="left:107.4px;width:71px">Skupina: 1</div>
<div class="sb" style="left:180.7px;width:61.3px;padding-left:9px">Dynamic COM - OK</div>
<div class="sb" style="left:242.6px;width:61.6px;padding-left:9px">Dynamic PG - OK</div>
<div class="sb" style="left:306px;width:318px;border-right:none">Sledování chyb zapnuto</div>
<svg class="a" style="left:183.2px;top:413.8px" width="6" height="6" viewBox="0 0 6 6"><path d="M0.5 3.2 L2.2 5.3 L5.6 0.6" fill="none" stroke="#1a3ee0" stroke-width="1.1"/></svg>
<svg class="a" style="left:245.0px;top:413.8px" width="6" height="6" viewBox="0 0 6 6"><path d="M0.5 3.2 L2.2 5.3 L5.6 0.6" fill="none" stroke="#1a3ee0" stroke-width="1.1"/></svg>
<svg class="a" style="left:365px;top:412px" width="22" height="9" viewBox="365 412 22 9"><path d="M366 415.2 C368.5 413.6 372 413.6 374 415.6 C372.5 418.4 368.5 418.6 366 415.2Z" fill="#e8f0f0" stroke="#1e1e1e" stroke-width="0.9"/><circle cx="370.2" cy="416" r="1.4" fill="#2a9ad0"/><path d="M370.5 413.8 C373 413.6 375.5 415 376.8 418.8" fill="none" stroke="#1a8a2a" stroke-width="0.9"/><path d="M374 415.6 L376.6 419" stroke="#222" stroke-width="0.7"/><circle cx="381.2" cy="415.2" r="2.2" fill="#8a8a8a"/><circle cx="380.8" cy="414.8" r="1" fill="#c8c8c8"/><path d="M382.5 417.5 L384.5 419.5" stroke="#b0a8f0" stroke-width="0.7"/></svg>
<svg class="a" style="left:620px;top:413.5px" width="7" height="7" viewBox="0 0 7 7"><path d="M6.5 1 L1 6.5 M6.5 3.5 L3.5 6.5 M6.5 5.5 L5.5 6.5" stroke="#b0b0b0" stroke-width="0.6"/></svg>
<div class="a" style="left:31px;top:431px;width:88px;height:48px;background:#afc81e"></div>
<div class="a" style="left:118.5px;top:431px;width:510px;height:48px;background:#004e98"></div>
<div class="t" style="left:411px;top:440px;font-size:14px;color:#fff;-webkit-text-stroke:0.4px #fff">Archiv dokumentace procesů</div>
<div class="t" style="left:411px;top:455.5px;font-size:14px;color:#fff;-webkit-text-stroke:0.4px #fff">výpis z parního sterilizátoru</div>
</div></body></html>
